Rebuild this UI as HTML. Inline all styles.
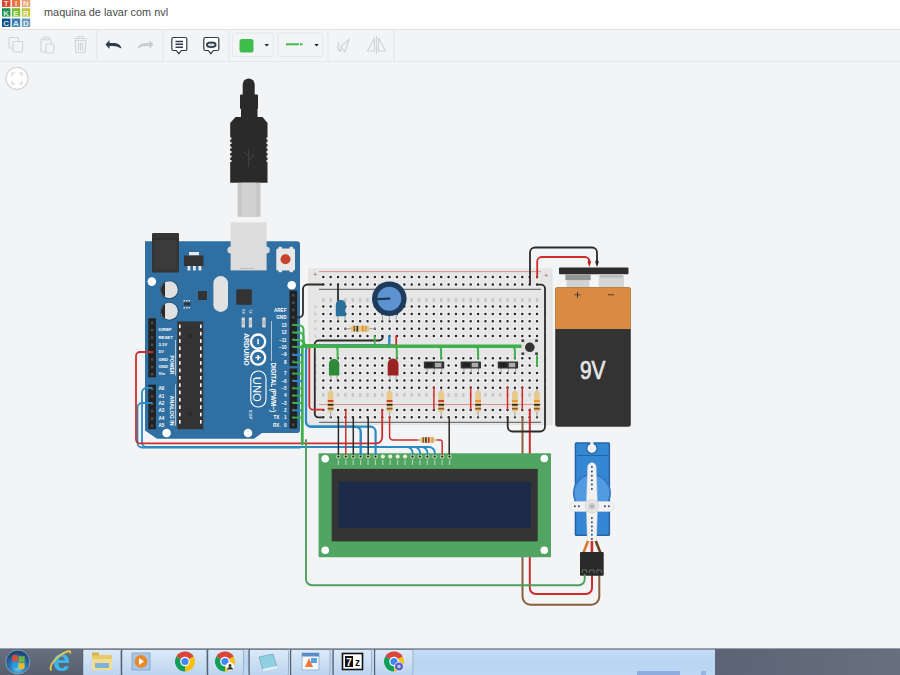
<!DOCTYPE html>
<html><head><meta charset="utf-8"><style>
html,body{margin:0;padding:0;background:#f3f4f6;overflow:hidden}
svg{display:block}
</style></head><body>
<svg width="900" height="675" viewBox="0 0 900 675">
<rect width="900" height="675" fill="#f3f4f6"/>
<rect x="0" y="0" width="900" height="29" fill="#ffffff"/>
<rect x="0" y="29" width="900" height="1" fill="#e2e3e5"/>
<rect x="0" y="30" width="900" height="31" fill="#f3f4f6"/>
<rect x="0" y="61" width="900" height="1" fill="#e6e7e9"/>
<rect x="2" y="-1.5" width="8.4" height="8.4" fill="#d9452f"/>
<text x="6.2" y="5.8" font-family='"Liberation Sans", sans-serif' font-weight="bold" font-size="8" fill="#ffffff" fill-opacity="0.85" text-anchor="middle">T</text>
<rect x="11.8" y="-1.5" width="8.4" height="8.4" fill="#e9743f"/>
<text x="16.0" y="5.8" font-family='"Liberation Sans", sans-serif' font-weight="bold" font-size="8" fill="#ffffff" fill-opacity="0.85" text-anchor="middle">I</text>
<rect x="21.8" y="-1.5" width="8.4" height="8.4" fill="#e3a070"/>
<text x="26.0" y="5.8" font-family='"Liberation Sans", sans-serif' font-weight="bold" font-size="8" fill="#ffffff" fill-opacity="0.85" text-anchor="middle">N</text>
<rect x="2" y="8.2" width="8.4" height="8.4" fill="#1f9350"/>
<text x="6.2" y="15.5" font-family='"Liberation Sans", sans-serif' font-weight="bold" font-size="8" fill="#ffffff" fill-opacity="0.85" text-anchor="middle">K</text>
<rect x="11.8" y="8.2" width="8.4" height="8.4" fill="#7cbd2f"/>
<text x="16.0" y="15.5" font-family='"Liberation Sans", sans-serif' font-weight="bold" font-size="8" fill="#ffffff" fill-opacity="0.85" text-anchor="middle">E</text>
<rect x="21.8" y="8.2" width="8.4" height="8.4" fill="#c5c43f"/>
<text x="26.0" y="15.5" font-family='"Liberation Sans", sans-serif' font-weight="bold" font-size="8" fill="#ffffff" fill-opacity="0.85" text-anchor="middle">R</text>
<rect x="2" y="18.5" width="8.4" height="8.4" fill="#0c4f8a"/>
<text x="6.2" y="25.8" font-family='"Liberation Sans", sans-serif' font-weight="bold" font-size="8" fill="#ffffff" fill-opacity="0.85" text-anchor="middle">C</text>
<rect x="11.8" y="18.5" width="8.4" height="8.4" fill="#3a7fb2"/>
<text x="16.0" y="25.8" font-family='"Liberation Sans", sans-serif' font-weight="bold" font-size="8" fill="#ffffff" fill-opacity="0.85" text-anchor="middle">A</text>
<rect x="21.8" y="18.5" width="8.4" height="8.4" fill="#6a9dc4"/>
<text x="26.0" y="25.8" font-family='"Liberation Sans", sans-serif' font-weight="bold" font-size="8" fill="#ffffff" fill-opacity="0.85" text-anchor="middle">D</text>
<text x="44" y="16" font-family='"Liberation Sans", sans-serif' font-size="10.9" fill="#4a4a4a">maquina de lavar com nvl</text>
<rect x="96.5" y="30" width="1" height="31" fill="#e3e4e6"/>
<rect x="162.5" y="30" width="1" height="31" fill="#e3e4e6"/>
<rect x="228.5" y="30" width="1" height="31" fill="#e3e4e6"/>
<rect x="327.5" y="30" width="1" height="31" fill="#e3e4e6"/>
<rect x="393.5" y="30" width="1" height="31" fill="#e3e4e6"/>
<g fill="none" stroke="#d2d4d7" stroke-width="1.15"><rect x="9" y="37.5" width="9.5" height="10.5" rx="1"/><rect x="13" y="41.5" width="9.5" height="10.5" rx="1" fill="#f3f4f6"/></g>
<g fill="none" stroke="#d2d4d7" stroke-width="1.15"><rect x="41" y="39" width="10" height="13" rx="1"/><rect x="43.5" y="37" width="5" height="3" rx="0.8"/><rect x="46" y="44" width="8" height="9" rx="1" fill="#f3f4f6"/></g>
<g fill="none" stroke="#d2d4d7" stroke-width="1.15"><path d="M73.5 38.5h14M78 38.5v-2h5v2"/><path d="M75 40.5h11l-1 12h-9z"/><path d="M78.5 42.5v8M80.5 42.5v8M82.5 42.5v8"/></g>
<path d="M121.5 48.5c-1-4-4-5.5-8.5-5.5h-3.5v-3l-4 4.5 4 4.5v-3h3c3 0 5.5 0.8 9 2.5z" fill="#2d3b4a"/>
<path d="M137.5 48.5c1-4 4-5.5 8.5-5.5h3.5v-3l4 4.5-4 4.5v-3h-3c-3 0-5.5 0.8-9 2.5z" fill="#c9cdd2"/>
<g fill="#ffffff" stroke="#2d3b4a" stroke-width="1.2"><path d="M173.3 37.5h12a1.5 1.5 0 0 1 1.5 1.5v10a1.5 1.5 0 0 1-1.5 1.5h-4l-2.5 3.2-2.5-3.2h-3a1.5 1.5 0 0 1-1.5-1.5v-10a1.5 1.5 0 0 1 1.5-1.5z"/></g><path d="M175.5 41.5h7.5M175.5 44.3h7.5M175.5 47.3h7.5" stroke="#2d3b4a" stroke-width="1.4"/>
<g fill="#ffffff" stroke="#2d3b4a" stroke-width="1.2"><path d="M205.3 37.5h12a1.5 1.5 0 0 1 1.5 1.5v10a1.5 1.5 0 0 1-1.5 1.5h-4l-2.5 3.2-2.5-3.2h-3a1.5 1.5 0 0 1-1.5-1.5v-10a1.5 1.5 0 0 1 1.5-1.5z"/></g>
<ellipse cx="211.3" cy="44.8" rx="4.3" ry="2.3" fill="#e8eaee" stroke="#2d3b4a" stroke-width="1.9"/><circle cx="211.3" cy="44.8" r="0.8" fill="#9aa"/>
<rect x="232.5" y="33" width="41" height="23.5" rx="2" fill="#f3f4f6" stroke="#e6e7e9"/>
<rect x="239.5" y="39" width="14" height="13.5" rx="2.5" fill="#3dbd4a"/>
<path d="M264.5 44h4.5l-2.25 2.5z" fill="#222"/>
<rect x="278" y="33" width="45" height="23.5" rx="2" fill="#f3f4f6" stroke="#e6e7e9"/>
<rect x="286" y="43.3" width="13" height="2" fill="#3dbd4a"/><rect x="300" y="43.3" width="2.5" height="2" fill="#3dbd4a"/>
<path d="M314.3 44h4.5l-2.25 2.5z" fill="#222"/>
<g fill="none" stroke="#d2d4d7" stroke-width="1.3" stroke-linejoin="round"><path d="M349.3 39.5L340.5 46.5l4.3 5.2z"/><path d="M339 42.5a6 6 0 0 0 1.5 8.5"/><path d="M337.5 49.5l3 1.8 0.5-3"/></g>
<g fill="none" stroke="#d2d4d7" stroke-width="1.2"><path d="M376.5 36v18"/><path d="M374.5 38l-7 13h7z"/><path d="M378.5 38l7 13h-7z"/></g>
<circle cx="17" cy="78.4" r="11" fill="#ffffff" stroke="#d4d5d7" stroke-width="1.2"/>
<g fill="none" stroke="#cfd0d2" stroke-width="1.2"><path d="M12 76v-3h3M22 76v-3h-3M12 81v3h3M22 81v3h-3"/></g>
<rect x="242.7" y="78.5" width="12" height="22" rx="6" fill="#2a2a2a"/>
<rect x="240" y="94.5" width="18" height="14.5" rx="1" fill="#2a2a2a"/>
<rect x="241" y="107" width="16.5" height="11" fill="#2a2a2a"/>
<path d="M235.5 117h27l5 6v59.8h-37.3v-59.8z" fill="#2a2a2a"/>
<rect x="229.7" y="137.5" width="1.8" height="2" fill="#f3f4f6"/>
<rect x="266.5" y="137.5" width="1.8" height="2" fill="#f3f4f6"/>
<rect x="229.7" y="142.0" width="1.8" height="2" fill="#f3f4f6"/>
<rect x="266.5" y="142.0" width="1.8" height="2" fill="#f3f4f6"/>
<rect x="229.7" y="146.5" width="1.8" height="2" fill="#f3f4f6"/>
<rect x="266.5" y="146.5" width="1.8" height="2" fill="#f3f4f6"/>
<rect x="229.7" y="151.0" width="1.8" height="2" fill="#f3f4f6"/>
<rect x="266.5" y="151.0" width="1.8" height="2" fill="#f3f4f6"/>
<rect x="229.7" y="155.5" width="1.8" height="2" fill="#f3f4f6"/>
<rect x="266.5" y="155.5" width="1.8" height="2" fill="#f3f4f6"/>
<rect x="229.7" y="160.0" width="1.8" height="2" fill="#f3f4f6"/>
<rect x="266.5" y="160.0" width="1.8" height="2" fill="#f3f4f6"/>
<g stroke="#444" stroke-width="1" fill="none"><path d="M248.6 149v18M248.6 156l-4 -3v-2M248.6 160l4 -3v-3"/></g>
<rect x="237.6" y="182.8" width="23" height="34" fill="#c9c9c9"/>
<rect x="242" y="182.8" width="14" height="34" fill="#d2d2d2"/>
<rect x="152" y="233" width="27" height="39.5" rx="1.5" fill="#353535"/>
<rect x="155" y="238" width="21" height="30" fill="#3d3d3d"/>
<circle cx="231" cy="249.5" r="4" fill="#dcdcdc"/><circle cx="266" cy="249.5" r="4" fill="#dcdcdc"/>
<path d="M145 241.2H297a3 3 0 0 1 3 3V430a3 3 0 0 1-3 3H262l-8 5.8H157l-12-8.3z" fill="#2f6fa2"/>
<rect x="152" y="233" width="27" height="39.5" rx="1.5" fill="#353535"/>
<rect x="154.5" y="240" width="22" height="29" fill="#3b3b3b"/>
<rect x="152" y="238.5" width="27" height="0.8" fill="#2a2a2a"/>
<circle cx="231" cy="250" r="3.6" fill="#dadada"/><circle cx="266.2" cy="250" r="3.6" fill="#dadada"/>
<rect x="230.6" y="222.4" width="36" height="48" fill="#dcdcdc"/>
<rect x="240" y="268" width="14" height="1" fill="#bbbbbb"/>
<rect x="189" y="252" width="10" height="3.5" fill="#e8e8e8"/>
<rect x="184" y="255.5" width="19.5" height="10.5" fill="#333"/>
<rect x="187.5" y="266" width="2.8" height="4.5" fill="#e8e8e8"/>
<rect x="193" y="266" width="2.8" height="4.5" fill="#e8e8e8"/>
<rect x="198.5" y="266" width="2.8" height="4.5" fill="#e8e8e8"/>
<rect x="278.5" y="246.8" width="3.5" height="2.5" fill="#e0e0e0"/>
<rect x="289.5" y="246.8" width="3.5" height="2.5" fill="#e0e0e0"/>
<rect x="278.5" y="269.7" width="3.5" height="2.5" fill="#e0e0e0"/>
<rect x="289.5" y="269.7" width="3.5" height="2.5" fill="#e0e0e0"/>
<rect x="276.3" y="248.5" width="18.7" height="22" rx="1.5" fill="#e8e8e8"/>
<circle cx="285.5" cy="259.3" r="5" fill="#c9402c"/>
<circle cx="151.8" cy="281.6" r="4.3" fill="#ffffff"/>
<circle cx="291.7" cy="285.2" r="4.3" fill="#ffffff"/>
<circle cx="166.6" cy="433" r="4.3" fill="#ffffff"/>
<circle cx="248" cy="433" r="4.3" fill="#ffffff"/>
<circle cx="169.3" cy="289.8" r="9.3" fill="#1e4a70"/>
<circle cx="169.3" cy="289.8" r="8.5" fill="#e0e0e0"/>
<path d="M165 282.55A8.5 8.5 0 0 0 165 297.05z" fill="#2a2a2a"/>
<circle cx="169.3" cy="311.3" r="9.3" fill="#1e4a70"/>
<circle cx="169.3" cy="311.3" r="8.5" fill="#e0e0e0"/>
<path d="M165 304.05A8.5 8.5 0 0 0 165 318.55z" fill="#2a2a2a"/>
<rect x="198" y="291" width="9" height="9" fill="#333"/>
<rect x="184" y="302.5" width="6.5" height="3" fill="#333"/>
<rect x="183.5" y="300" width="1.5" height="1.5" fill="#ddd"/><rect x="183.5" y="307" width="1.5" height="1.5" fill="#ddd"/>
<rect x="186" y="300" width="1.5" height="1.5" fill="#ddd"/><rect x="186" y="307" width="1.5" height="1.5" fill="#ddd"/>
<rect x="188.5" y="300" width="1.5" height="1.5" fill="#ddd"/><rect x="188.5" y="307" width="1.5" height="1.5" fill="#ddd"/>
<rect x="213.4" y="276" width="14.6" height="36" rx="7.3" fill="#e2e2e2"/>
<rect x="236.3" y="289.3" width="15.5" height="15.5" fill="#333"/>
<rect x="241.6" y="317.5" width="3.3" height="10" fill="#dadada"/><rect x="242.2" y="320" width="2.1" height="5" fill="#bbb"/>
<rect x="248.8" y="317.5" width="3.3" height="10" fill="#dadada"/><rect x="249.4" y="320" width="2.1" height="5" fill="#bbb"/>
<rect x="262.3" y="317.5" width="3.3" height="10" fill="#dadada"/><rect x="262.90000000000003" y="320" width="2.1" height="5" fill="#bbb"/>
<text transform="translate(242 309) rotate(90)" font-family='"Liberation Sans", sans-serif' font-size="3.5" fill="#fff">RX</text>
<text transform="translate(249.3 309) rotate(90)" font-family='"Liberation Sans", sans-serif' font-size="3.5" fill="#fff">TX</text>
<rect x="177.3" y="321.4" width="26" height="107.8" fill="#333"/>
<rect x="179" y="324.5" width="1.6" height="3.6" fill="#fff"/><rect x="200" y="324.5" width="1.6" height="3.6" fill="#fff"/>
<rect x="179" y="331.85" width="1.6" height="3.6" fill="#fff"/><rect x="200" y="331.85" width="1.6" height="3.6" fill="#fff"/>
<rect x="179" y="339.2" width="1.6" height="3.6" fill="#fff"/><rect x="200" y="339.2" width="1.6" height="3.6" fill="#fff"/>
<rect x="179" y="346.55" width="1.6" height="3.6" fill="#fff"/><rect x="200" y="346.55" width="1.6" height="3.6" fill="#fff"/>
<rect x="179" y="353.9" width="1.6" height="3.6" fill="#fff"/><rect x="200" y="353.9" width="1.6" height="3.6" fill="#fff"/>
<rect x="179" y="361.25" width="1.6" height="3.6" fill="#fff"/><rect x="200" y="361.25" width="1.6" height="3.6" fill="#fff"/>
<rect x="179" y="368.6" width="1.6" height="3.6" fill="#fff"/><rect x="200" y="368.6" width="1.6" height="3.6" fill="#fff"/>
<rect x="179" y="375.95" width="1.6" height="3.6" fill="#fff"/><rect x="200" y="375.95" width="1.6" height="3.6" fill="#fff"/>
<rect x="179" y="383.3" width="1.6" height="3.6" fill="#fff"/><rect x="200" y="383.3" width="1.6" height="3.6" fill="#fff"/>
<rect x="179" y="390.65" width="1.6" height="3.6" fill="#fff"/><rect x="200" y="390.65" width="1.6" height="3.6" fill="#fff"/>
<rect x="179" y="398.0" width="1.6" height="3.6" fill="#fff"/><rect x="200" y="398.0" width="1.6" height="3.6" fill="#fff"/>
<rect x="179" y="405.35" width="1.6" height="3.6" fill="#fff"/><rect x="200" y="405.35" width="1.6" height="3.6" fill="#fff"/>
<rect x="179" y="412.7" width="1.6" height="3.6" fill="#fff"/><rect x="200" y="412.7" width="1.6" height="3.6" fill="#fff"/>
<rect x="179" y="420.05" width="1.6" height="3.6" fill="#fff"/><rect x="200" y="420.05" width="1.6" height="3.6" fill="#fff"/>
<circle cx="190.3" cy="336" r="2.2" fill="#2a2a2a"/><circle cx="190.3" cy="414" r="2.2" fill="#2a2a2a"/>
<rect x="148.3" y="318.3" width="7.6" height="59" fill="#222"/>
<rect x="150.8" y="321.5" width="2.6" height="2.6" fill="#4a4a4a"/>
<rect x="150.8" y="328.85" width="2.6" height="2.6" fill="#4a4a4a"/>
<rect x="150.8" y="336.2" width="2.6" height="2.6" fill="#4a4a4a"/>
<rect x="150.8" y="343.55" width="2.6" height="2.6" fill="#4a4a4a"/>
<rect x="150.8" y="350.9" width="2.6" height="2.6" fill="#4a4a4a"/>
<rect x="150.8" y="358.25" width="2.6" height="2.6" fill="#4a4a4a"/>
<rect x="150.8" y="365.6" width="2.6" height="2.6" fill="#4a4a4a"/>
<rect x="150.8" y="372.95" width="2.6" height="2.6" fill="#4a4a4a"/>
<rect x="148.3" y="384.7" width="7.6" height="44.5" fill="#222"/>
<rect x="150.8" y="387.8" width="2.6" height="2.6" fill="#4a4a4a"/>
<rect x="150.8" y="395.15000000000003" width="2.6" height="2.6" fill="#4a4a4a"/>
<rect x="150.8" y="402.5" width="2.6" height="2.6" fill="#4a4a4a"/>
<rect x="150.8" y="409.85" width="2.6" height="2.6" fill="#4a4a4a"/>
<rect x="150.8" y="417.2" width="2.6" height="2.6" fill="#4a4a4a"/>
<rect x="150.8" y="424.55" width="2.6" height="2.6" fill="#4a4a4a"/>
<text x="158.5" y="331.3" font-family='"Liberation Sans", sans-serif' font-size="4.3" font-weight="bold" fill="#fff">IOREF</text>
<text x="158.5" y="338.65000000000003" font-family='"Liberation Sans", sans-serif' font-size="4.3" font-weight="bold" fill="#fff">RESET</text>
<text x="158.5" y="346.0" font-family='"Liberation Sans", sans-serif' font-size="4.3" font-weight="bold" fill="#fff">3.3V</text>
<text x="158.5" y="353.35" font-family='"Liberation Sans", sans-serif' font-size="4.3" font-weight="bold" fill="#fff">5V</text>
<text x="158.5" y="360.7" font-family='"Liberation Sans", sans-serif' font-size="4.3" font-weight="bold" fill="#fff">GND</text>
<text x="158.5" y="368.05" font-family='"Liberation Sans", sans-serif' font-size="4.3" font-weight="bold" fill="#fff">GND</text>
<text x="158.5" y="375.4" font-family='"Liberation Sans", sans-serif' font-size="4.3" font-weight="bold" fill="#fff">Vin</text>
<text x="158.5" y="390.3" font-family='"Liberation Sans", sans-serif' font-size="4.6" font-weight="bold" fill="#fff">A0</text>
<text x="158.5" y="397.65000000000003" font-family='"Liberation Sans", sans-serif' font-size="4.6" font-weight="bold" fill="#fff">A1</text>
<text x="158.5" y="405.0" font-family='"Liberation Sans", sans-serif' font-size="4.6" font-weight="bold" fill="#fff">A2</text>
<text x="158.5" y="412.35" font-family='"Liberation Sans", sans-serif' font-size="4.6" font-weight="bold" fill="#fff">A3</text>
<text x="158.5" y="419.7" font-family='"Liberation Sans", sans-serif' font-size="4.6" font-weight="bold" fill="#fff">A4</text>
<text x="158.5" y="427.05" font-family='"Liberation Sans", sans-serif' font-size="4.6" font-weight="bold" fill="#fff">A5</text>
<text transform="translate(170.2 355.5) rotate(90)" font-family='"Liberation Sans", sans-serif' font-size="5" font-weight="bold" fill="#fff">POWER</text>
<rect x="175.1" y="340" width="0.6" height="35.5" fill="#fff"/>
<text transform="translate(170.2 395.5) rotate(90)" font-family='"Liberation Sans", sans-serif' font-size="5.4" font-weight="bold" fill="#fff">ANALOG IN</text>
<rect x="175.1" y="384.3" width="0.6" height="41.5" fill="#fff"/>
<rect x="289.5" y="290.5" width="7.6" height="75.5" fill="#222"/>
<rect x="289.5" y="368.5" width="7.6" height="60" fill="#222"/>
<rect x="292" y="294.0" width="2.6" height="2.6" fill="#4a4a4a"/>
<rect x="292" y="301.35" width="2.6" height="2.6" fill="#4a4a4a"/>
<rect x="292" y="308.7" width="2.6" height="2.6" fill="#4a4a4a"/>
<rect x="292" y="316.05" width="2.6" height="2.6" fill="#4a4a4a"/>
<rect x="292" y="323.4" width="2.6" height="2.6" fill="#4a4a4a"/>
<rect x="292" y="330.75" width="2.6" height="2.6" fill="#4a4a4a"/>
<rect x="292" y="338.1" width="2.6" height="2.6" fill="#4a4a4a"/>
<rect x="292" y="345.45" width="2.6" height="2.6" fill="#4a4a4a"/>
<rect x="292" y="352.8" width="2.6" height="2.6" fill="#4a4a4a"/>
<rect x="292" y="360.15" width="2.6" height="2.6" fill="#4a4a4a"/>
<rect x="292" y="372.0" width="2.6" height="2.6" fill="#4a4a4a"/>
<rect x="292" y="379.35" width="2.6" height="2.6" fill="#4a4a4a"/>
<rect x="292" y="386.7" width="2.6" height="2.6" fill="#4a4a4a"/>
<rect x="292" y="394.05" width="2.6" height="2.6" fill="#4a4a4a"/>
<rect x="292" y="401.4" width="2.6" height="2.6" fill="#4a4a4a"/>
<rect x="292" y="408.75" width="2.6" height="2.6" fill="#4a4a4a"/>
<rect x="292" y="416.1" width="2.6" height="2.6" fill="#4a4a4a"/>
<rect x="292" y="423.45" width="2.6" height="2.6" fill="#4a4a4a"/>
<text x="286.5" y="311.5" font-family='"Liberation Sans", sans-serif' font-size="4.6" font-weight="bold" fill="#fff" text-anchor="end">AREF</text>
<text x="286.5" y="318.8" font-family='"Liberation Sans", sans-serif' font-size="4.6" font-weight="bold" fill="#fff" text-anchor="end">GND</text>
<text x="286.5" y="326.5" font-family='"Liberation Sans", sans-serif' font-size="4.6" font-weight="bold" fill="#fff" text-anchor="end">13</text>
<text x="286.5" y="334.2" font-family='"Liberation Sans", sans-serif' font-size="4.6" font-weight="bold" fill="#fff" text-anchor="end">12</text>
<text x="286.5" y="341.5" font-family='"Liberation Sans", sans-serif' font-size="4.6" font-weight="bold" fill="#fff" text-anchor="end">~11</text>
<text x="286.5" y="348.8" font-family='"Liberation Sans", sans-serif' font-size="4.6" font-weight="bold" fill="#fff" text-anchor="end">~10</text>
<text x="286.5" y="356" font-family='"Liberation Sans", sans-serif' font-size="4.6" font-weight="bold" fill="#fff" text-anchor="end">~9</text>
<text x="286.5" y="363.5" font-family='"Liberation Sans", sans-serif' font-size="4.6" font-weight="bold" fill="#fff" text-anchor="end">8</text>
<text x="286.5" y="374.8" font-family='"Liberation Sans", sans-serif' font-size="4.6" font-weight="bold" fill="#fff" text-anchor="end">7</text>
<text x="286.5" y="382.5" font-family='"Liberation Sans", sans-serif' font-size="4.6" font-weight="bold" fill="#fff" text-anchor="end">~6</text>
<text x="286.5" y="389.8" font-family='"Liberation Sans", sans-serif' font-size="4.6" font-weight="bold" fill="#fff" text-anchor="end">~5</text>
<text x="286.5" y="397.3" font-family='"Liberation Sans", sans-serif' font-size="4.6" font-weight="bold" fill="#fff" text-anchor="end">4</text>
<text x="286.5" y="404.8" font-family='"Liberation Sans", sans-serif' font-size="4.6" font-weight="bold" fill="#fff" text-anchor="end">~3</text>
<text x="286.5" y="412" font-family='"Liberation Sans", sans-serif' font-size="4.6" font-weight="bold" fill="#fff" text-anchor="end">2</text>
<text x="286.5" y="419.3" font-family='"Liberation Sans", sans-serif' font-size="4.6" font-weight="bold" fill="#fff" text-anchor="end">TX→1</text>
<text x="286.5" y="427" font-family='"Liberation Sans", sans-serif' font-size="4.6" font-weight="bold" fill="#fff" text-anchor="end">RX←0</text>
<text transform="translate(271.3 362.4) rotate(90)" font-family='"Liberation Sans", sans-serif' font-size="6.3" font-weight="bold" fill="#fff">DIGITAL (PWM~)</text>
<rect x="271" y="321" width="0.6" height="40" fill="#fff"/>
<text transform="translate(243.5 333) rotate(90)" font-family='"Liberation Sans", sans-serif' font-size="7" font-weight="bold" fill="#fff">ARDUINO</text>
<g fill="none" stroke="#fff" stroke-width="2.3"><circle cx="258.1" cy="341.6" r="7.1"/><circle cx="258.1" cy="357.6" r="7.1"/></g>
<g stroke="#fff" stroke-width="1.5"><path d="M258.1 339v5.2"/><path d="M258.1 355v5.2M255.5 357.6h5.2"/></g>
<rect x="250.8" y="371" width="15.2" height="36" rx="7.6" fill="none" stroke="#fff" stroke-width="1.1"/>
<text transform="translate(253.2 376.8) rotate(90)" font-family='"Liberation Sans", sans-serif' font-size="11.2" fill="#fff">UNO</text>
<text transform="translate(249 410) rotate(90)" font-family='"Liberation Sans", sans-serif' font-size="4" font-weight="bold" fill="#e8e8e8">ICSP</text>
<rect x="308.5" y="268.5" width="244" height="156.5" rx="1.5" fill="#dedede"/>
<rect x="309.5" y="269" width="242" height="155.5" fill="#e6e6e6"/>
<rect x="319" y="271.2" width="222" height="0.9" fill="#d48a8a"/>
<rect x="319" y="288.8" width="222" height="1" fill="#555"/>
<rect x="319" y="404" width="222" height="0.9" fill="#d48a8a"/>
<rect x="319" y="421.8" width="222" height="1" fill="#555"/>
<text x="315.1" y="277" font-family='"Liberation Sans", sans-serif' font-size="7.5" fill="#b86060" text-anchor="middle">+</text>
<text x="546.2" y="277.5" font-family='"Liberation Sans", sans-serif' font-size="7.5" fill="#b86060" text-anchor="middle">+</text>
<path fill="#f0f0f0" d="M321.00 274.80h4.6v4.6h-4.6zM328.37 274.80h4.6v4.6h-4.6zM335.74 274.80h4.6v4.6h-4.6zM343.11 274.80h4.6v4.6h-4.6zM350.48 274.80h4.6v4.6h-4.6zM357.85 274.80h4.6v4.6h-4.6zM365.22 274.80h4.6v4.6h-4.6zM372.59 274.80h4.6v4.6h-4.6zM379.96 274.80h4.6v4.6h-4.6zM387.33 274.80h4.6v4.6h-4.6zM394.70 274.80h4.6v4.6h-4.6zM402.07 274.80h4.6v4.6h-4.6zM409.44 274.80h4.6v4.6h-4.6zM416.81 274.80h4.6v4.6h-4.6zM424.18 274.80h4.6v4.6h-4.6zM431.55 274.80h4.6v4.6h-4.6zM438.92 274.80h4.6v4.6h-4.6zM446.29 274.80h4.6v4.6h-4.6zM453.66 274.80h4.6v4.6h-4.6zM461.03 274.80h4.6v4.6h-4.6zM468.40 274.80h4.6v4.6h-4.6zM475.77 274.80h4.6v4.6h-4.6zM483.14 274.80h4.6v4.6h-4.6zM490.51 274.80h4.6v4.6h-4.6zM497.88 274.80h4.6v4.6h-4.6zM505.25 274.80h4.6v4.6h-4.6zM512.62 274.80h4.6v4.6h-4.6zM519.99 274.80h4.6v4.6h-4.6zM527.36 274.80h4.6v4.6h-4.6zM534.73 274.80h4.6v4.6h-4.6zM321.00 282.20h4.6v4.6h-4.6zM328.37 282.20h4.6v4.6h-4.6zM335.74 282.20h4.6v4.6h-4.6zM343.11 282.20h4.6v4.6h-4.6zM350.48 282.20h4.6v4.6h-4.6zM357.85 282.20h4.6v4.6h-4.6zM365.22 282.20h4.6v4.6h-4.6zM372.59 282.20h4.6v4.6h-4.6zM379.96 282.20h4.6v4.6h-4.6zM387.33 282.20h4.6v4.6h-4.6zM394.70 282.20h4.6v4.6h-4.6zM402.07 282.20h4.6v4.6h-4.6zM409.44 282.20h4.6v4.6h-4.6zM416.81 282.20h4.6v4.6h-4.6zM424.18 282.20h4.6v4.6h-4.6zM431.55 282.20h4.6v4.6h-4.6zM438.92 282.20h4.6v4.6h-4.6zM446.29 282.20h4.6v4.6h-4.6zM453.66 282.20h4.6v4.6h-4.6zM461.03 282.20h4.6v4.6h-4.6zM468.40 282.20h4.6v4.6h-4.6zM475.77 282.20h4.6v4.6h-4.6zM483.14 282.20h4.6v4.6h-4.6zM490.51 282.20h4.6v4.6h-4.6zM497.88 282.20h4.6v4.6h-4.6zM505.25 282.20h4.6v4.6h-4.6zM512.62 282.20h4.6v4.6h-4.6zM519.99 282.20h4.6v4.6h-4.6zM527.36 282.20h4.6v4.6h-4.6zM534.73 282.20h4.6v4.6h-4.6zM321.00 304.30h4.6v4.6h-4.6zM328.37 304.30h4.6v4.6h-4.6zM335.74 304.30h4.6v4.6h-4.6zM343.11 304.30h4.6v4.6h-4.6zM350.48 304.30h4.6v4.6h-4.6zM357.85 304.30h4.6v4.6h-4.6zM365.22 304.30h4.6v4.6h-4.6zM372.59 304.30h4.6v4.6h-4.6zM379.96 304.30h4.6v4.6h-4.6zM387.33 304.30h4.6v4.6h-4.6zM394.70 304.30h4.6v4.6h-4.6zM402.07 304.30h4.6v4.6h-4.6zM409.44 304.30h4.6v4.6h-4.6zM416.81 304.30h4.6v4.6h-4.6zM424.18 304.30h4.6v4.6h-4.6zM431.55 304.30h4.6v4.6h-4.6zM438.92 304.30h4.6v4.6h-4.6zM446.29 304.30h4.6v4.6h-4.6zM453.66 304.30h4.6v4.6h-4.6zM461.03 304.30h4.6v4.6h-4.6zM468.40 304.30h4.6v4.6h-4.6zM475.77 304.30h4.6v4.6h-4.6zM483.14 304.30h4.6v4.6h-4.6zM490.51 304.30h4.6v4.6h-4.6zM497.88 304.30h4.6v4.6h-4.6zM505.25 304.30h4.6v4.6h-4.6zM512.62 304.30h4.6v4.6h-4.6zM519.99 304.30h4.6v4.6h-4.6zM527.36 304.30h4.6v4.6h-4.6zM534.73 304.30h4.6v4.6h-4.6zM321.00 311.70h4.6v4.6h-4.6zM328.37 311.70h4.6v4.6h-4.6zM335.74 311.70h4.6v4.6h-4.6zM343.11 311.70h4.6v4.6h-4.6zM350.48 311.70h4.6v4.6h-4.6zM357.85 311.70h4.6v4.6h-4.6zM365.22 311.70h4.6v4.6h-4.6zM372.59 311.70h4.6v4.6h-4.6zM379.96 311.70h4.6v4.6h-4.6zM387.33 311.70h4.6v4.6h-4.6zM394.70 311.70h4.6v4.6h-4.6zM402.07 311.70h4.6v4.6h-4.6zM409.44 311.70h4.6v4.6h-4.6zM416.81 311.70h4.6v4.6h-4.6zM424.18 311.70h4.6v4.6h-4.6zM431.55 311.70h4.6v4.6h-4.6zM438.92 311.70h4.6v4.6h-4.6zM446.29 311.70h4.6v4.6h-4.6zM453.66 311.70h4.6v4.6h-4.6zM461.03 311.70h4.6v4.6h-4.6zM468.40 311.70h4.6v4.6h-4.6zM475.77 311.70h4.6v4.6h-4.6zM483.14 311.70h4.6v4.6h-4.6zM490.51 311.70h4.6v4.6h-4.6zM497.88 311.70h4.6v4.6h-4.6zM505.25 311.70h4.6v4.6h-4.6zM512.62 311.70h4.6v4.6h-4.6zM519.99 311.70h4.6v4.6h-4.6zM527.36 311.70h4.6v4.6h-4.6zM534.73 311.70h4.6v4.6h-4.6zM321.00 319.00h4.6v4.6h-4.6zM328.37 319.00h4.6v4.6h-4.6zM335.74 319.00h4.6v4.6h-4.6zM343.11 319.00h4.6v4.6h-4.6zM350.48 319.00h4.6v4.6h-4.6zM357.85 319.00h4.6v4.6h-4.6zM365.22 319.00h4.6v4.6h-4.6zM372.59 319.00h4.6v4.6h-4.6zM379.96 319.00h4.6v4.6h-4.6zM387.33 319.00h4.6v4.6h-4.6zM394.70 319.00h4.6v4.6h-4.6zM402.07 319.00h4.6v4.6h-4.6zM409.44 319.00h4.6v4.6h-4.6zM416.81 319.00h4.6v4.6h-4.6zM424.18 319.00h4.6v4.6h-4.6zM431.55 319.00h4.6v4.6h-4.6zM438.92 319.00h4.6v4.6h-4.6zM446.29 319.00h4.6v4.6h-4.6zM453.66 319.00h4.6v4.6h-4.6zM461.03 319.00h4.6v4.6h-4.6zM468.40 319.00h4.6v4.6h-4.6zM475.77 319.00h4.6v4.6h-4.6zM483.14 319.00h4.6v4.6h-4.6zM490.51 319.00h4.6v4.6h-4.6zM497.88 319.00h4.6v4.6h-4.6zM505.25 319.00h4.6v4.6h-4.6zM512.62 319.00h4.6v4.6h-4.6zM519.99 319.00h4.6v4.6h-4.6zM527.36 319.00h4.6v4.6h-4.6zM534.73 319.00h4.6v4.6h-4.6zM321.00 326.40h4.6v4.6h-4.6zM328.37 326.40h4.6v4.6h-4.6zM335.74 326.40h4.6v4.6h-4.6zM343.11 326.40h4.6v4.6h-4.6zM350.48 326.40h4.6v4.6h-4.6zM357.85 326.40h4.6v4.6h-4.6zM365.22 326.40h4.6v4.6h-4.6zM372.59 326.40h4.6v4.6h-4.6zM379.96 326.40h4.6v4.6h-4.6zM387.33 326.40h4.6v4.6h-4.6zM394.70 326.40h4.6v4.6h-4.6zM402.07 326.40h4.6v4.6h-4.6zM409.44 326.40h4.6v4.6h-4.6zM416.81 326.40h4.6v4.6h-4.6zM424.18 326.40h4.6v4.6h-4.6zM431.55 326.40h4.6v4.6h-4.6zM438.92 326.40h4.6v4.6h-4.6zM446.29 326.40h4.6v4.6h-4.6zM453.66 326.40h4.6v4.6h-4.6zM461.03 326.40h4.6v4.6h-4.6zM468.40 326.40h4.6v4.6h-4.6zM475.77 326.40h4.6v4.6h-4.6zM483.14 326.40h4.6v4.6h-4.6zM490.51 326.40h4.6v4.6h-4.6zM497.88 326.40h4.6v4.6h-4.6zM505.25 326.40h4.6v4.6h-4.6zM512.62 326.40h4.6v4.6h-4.6zM519.99 326.40h4.6v4.6h-4.6zM527.36 326.40h4.6v4.6h-4.6zM534.73 326.40h4.6v4.6h-4.6zM321.00 333.70h4.6v4.6h-4.6zM328.37 333.70h4.6v4.6h-4.6zM335.74 333.70h4.6v4.6h-4.6zM343.11 333.70h4.6v4.6h-4.6zM350.48 333.70h4.6v4.6h-4.6zM357.85 333.70h4.6v4.6h-4.6zM365.22 333.70h4.6v4.6h-4.6zM372.59 333.70h4.6v4.6h-4.6zM379.96 333.70h4.6v4.6h-4.6zM387.33 333.70h4.6v4.6h-4.6zM394.70 333.70h4.6v4.6h-4.6zM402.07 333.70h4.6v4.6h-4.6zM409.44 333.70h4.6v4.6h-4.6zM416.81 333.70h4.6v4.6h-4.6zM424.18 333.70h4.6v4.6h-4.6zM431.55 333.70h4.6v4.6h-4.6zM438.92 333.70h4.6v4.6h-4.6zM446.29 333.70h4.6v4.6h-4.6zM453.66 333.70h4.6v4.6h-4.6zM461.03 333.70h4.6v4.6h-4.6zM468.40 333.70h4.6v4.6h-4.6zM475.77 333.70h4.6v4.6h-4.6zM483.14 333.70h4.6v4.6h-4.6zM490.51 333.70h4.6v4.6h-4.6zM497.88 333.70h4.6v4.6h-4.6zM505.25 333.70h4.6v4.6h-4.6zM512.62 333.70h4.6v4.6h-4.6zM519.99 333.70h4.6v4.6h-4.6zM527.36 333.70h4.6v4.6h-4.6zM534.73 333.70h4.6v4.6h-4.6zM321.00 356.00h4.6v4.6h-4.6zM328.37 356.00h4.6v4.6h-4.6zM335.74 356.00h4.6v4.6h-4.6zM343.11 356.00h4.6v4.6h-4.6zM350.48 356.00h4.6v4.6h-4.6zM357.85 356.00h4.6v4.6h-4.6zM365.22 356.00h4.6v4.6h-4.6zM372.59 356.00h4.6v4.6h-4.6zM379.96 356.00h4.6v4.6h-4.6zM387.33 356.00h4.6v4.6h-4.6zM394.70 356.00h4.6v4.6h-4.6zM402.07 356.00h4.6v4.6h-4.6zM409.44 356.00h4.6v4.6h-4.6zM416.81 356.00h4.6v4.6h-4.6zM424.18 356.00h4.6v4.6h-4.6zM431.55 356.00h4.6v4.6h-4.6zM438.92 356.00h4.6v4.6h-4.6zM446.29 356.00h4.6v4.6h-4.6zM453.66 356.00h4.6v4.6h-4.6zM461.03 356.00h4.6v4.6h-4.6zM468.40 356.00h4.6v4.6h-4.6zM475.77 356.00h4.6v4.6h-4.6zM483.14 356.00h4.6v4.6h-4.6zM490.51 356.00h4.6v4.6h-4.6zM497.88 356.00h4.6v4.6h-4.6zM505.25 356.00h4.6v4.6h-4.6zM512.62 356.00h4.6v4.6h-4.6zM519.99 356.00h4.6v4.6h-4.6zM527.36 356.00h4.6v4.6h-4.6zM534.73 356.00h4.6v4.6h-4.6zM321.00 363.30h4.6v4.6h-4.6zM328.37 363.30h4.6v4.6h-4.6zM335.74 363.30h4.6v4.6h-4.6zM343.11 363.30h4.6v4.6h-4.6zM350.48 363.30h4.6v4.6h-4.6zM357.85 363.30h4.6v4.6h-4.6zM365.22 363.30h4.6v4.6h-4.6zM372.59 363.30h4.6v4.6h-4.6zM379.96 363.30h4.6v4.6h-4.6zM387.33 363.30h4.6v4.6h-4.6zM394.70 363.30h4.6v4.6h-4.6zM402.07 363.30h4.6v4.6h-4.6zM409.44 363.30h4.6v4.6h-4.6zM416.81 363.30h4.6v4.6h-4.6zM424.18 363.30h4.6v4.6h-4.6zM431.55 363.30h4.6v4.6h-4.6zM438.92 363.30h4.6v4.6h-4.6zM446.29 363.30h4.6v4.6h-4.6zM453.66 363.30h4.6v4.6h-4.6zM461.03 363.30h4.6v4.6h-4.6zM468.40 363.30h4.6v4.6h-4.6zM475.77 363.30h4.6v4.6h-4.6zM483.14 363.30h4.6v4.6h-4.6zM490.51 363.30h4.6v4.6h-4.6zM497.88 363.30h4.6v4.6h-4.6zM505.25 363.30h4.6v4.6h-4.6zM512.62 363.30h4.6v4.6h-4.6zM519.99 363.30h4.6v4.6h-4.6zM527.36 363.30h4.6v4.6h-4.6zM534.73 363.30h4.6v4.6h-4.6zM321.00 370.70h4.6v4.6h-4.6zM328.37 370.70h4.6v4.6h-4.6zM335.74 370.70h4.6v4.6h-4.6zM343.11 370.70h4.6v4.6h-4.6zM350.48 370.70h4.6v4.6h-4.6zM357.85 370.70h4.6v4.6h-4.6zM365.22 370.70h4.6v4.6h-4.6zM372.59 370.70h4.6v4.6h-4.6zM379.96 370.70h4.6v4.6h-4.6zM387.33 370.70h4.6v4.6h-4.6zM394.70 370.70h4.6v4.6h-4.6zM402.07 370.70h4.6v4.6h-4.6zM409.44 370.70h4.6v4.6h-4.6zM416.81 370.70h4.6v4.6h-4.6zM424.18 370.70h4.6v4.6h-4.6zM431.55 370.70h4.6v4.6h-4.6zM438.92 370.70h4.6v4.6h-4.6zM446.29 370.70h4.6v4.6h-4.6zM453.66 370.70h4.6v4.6h-4.6zM461.03 370.70h4.6v4.6h-4.6zM468.40 370.70h4.6v4.6h-4.6zM475.77 370.70h4.6v4.6h-4.6zM483.14 370.70h4.6v4.6h-4.6zM490.51 370.70h4.6v4.6h-4.6zM497.88 370.70h4.6v4.6h-4.6zM505.25 370.70h4.6v4.6h-4.6zM512.62 370.70h4.6v4.6h-4.6zM519.99 370.70h4.6v4.6h-4.6zM527.36 370.70h4.6v4.6h-4.6zM534.73 370.70h4.6v4.6h-4.6zM321.00 378.10h4.6v4.6h-4.6zM328.37 378.10h4.6v4.6h-4.6zM335.74 378.10h4.6v4.6h-4.6zM343.11 378.10h4.6v4.6h-4.6zM350.48 378.10h4.6v4.6h-4.6zM357.85 378.10h4.6v4.6h-4.6zM365.22 378.10h4.6v4.6h-4.6zM372.59 378.10h4.6v4.6h-4.6zM379.96 378.10h4.6v4.6h-4.6zM387.33 378.10h4.6v4.6h-4.6zM394.70 378.10h4.6v4.6h-4.6zM402.07 378.10h4.6v4.6h-4.6zM409.44 378.10h4.6v4.6h-4.6zM416.81 378.10h4.6v4.6h-4.6zM424.18 378.10h4.6v4.6h-4.6zM431.55 378.10h4.6v4.6h-4.6zM438.92 378.10h4.6v4.6h-4.6zM446.29 378.10h4.6v4.6h-4.6zM453.66 378.10h4.6v4.6h-4.6zM461.03 378.10h4.6v4.6h-4.6zM468.40 378.10h4.6v4.6h-4.6zM475.77 378.10h4.6v4.6h-4.6zM483.14 378.10h4.6v4.6h-4.6zM490.51 378.10h4.6v4.6h-4.6zM497.88 378.10h4.6v4.6h-4.6zM505.25 378.10h4.6v4.6h-4.6zM512.62 378.10h4.6v4.6h-4.6zM519.99 378.10h4.6v4.6h-4.6zM527.36 378.10h4.6v4.6h-4.6zM534.73 378.10h4.6v4.6h-4.6zM321.00 385.50h4.6v4.6h-4.6zM328.37 385.50h4.6v4.6h-4.6zM335.74 385.50h4.6v4.6h-4.6zM343.11 385.50h4.6v4.6h-4.6zM350.48 385.50h4.6v4.6h-4.6zM357.85 385.50h4.6v4.6h-4.6zM365.22 385.50h4.6v4.6h-4.6zM372.59 385.50h4.6v4.6h-4.6zM379.96 385.50h4.6v4.6h-4.6zM387.33 385.50h4.6v4.6h-4.6zM394.70 385.50h4.6v4.6h-4.6zM402.07 385.50h4.6v4.6h-4.6zM409.44 385.50h4.6v4.6h-4.6zM416.81 385.50h4.6v4.6h-4.6zM424.18 385.50h4.6v4.6h-4.6zM431.55 385.50h4.6v4.6h-4.6zM438.92 385.50h4.6v4.6h-4.6zM446.29 385.50h4.6v4.6h-4.6zM453.66 385.50h4.6v4.6h-4.6zM461.03 385.50h4.6v4.6h-4.6zM468.40 385.50h4.6v4.6h-4.6zM475.77 385.50h4.6v4.6h-4.6zM483.14 385.50h4.6v4.6h-4.6zM490.51 385.50h4.6v4.6h-4.6zM497.88 385.50h4.6v4.6h-4.6zM505.25 385.50h4.6v4.6h-4.6zM512.62 385.50h4.6v4.6h-4.6zM519.99 385.50h4.6v4.6h-4.6zM527.36 385.50h4.6v4.6h-4.6zM534.73 385.50h4.6v4.6h-4.6zM321.00 407.70h4.6v4.6h-4.6zM328.37 407.70h4.6v4.6h-4.6zM335.74 407.70h4.6v4.6h-4.6zM343.11 407.70h4.6v4.6h-4.6zM350.48 407.70h4.6v4.6h-4.6zM357.85 407.70h4.6v4.6h-4.6zM365.22 407.70h4.6v4.6h-4.6zM372.59 407.70h4.6v4.6h-4.6zM379.96 407.70h4.6v4.6h-4.6zM387.33 407.70h4.6v4.6h-4.6zM394.70 407.70h4.6v4.6h-4.6zM402.07 407.70h4.6v4.6h-4.6zM409.44 407.70h4.6v4.6h-4.6zM416.81 407.70h4.6v4.6h-4.6zM424.18 407.70h4.6v4.6h-4.6zM431.55 407.70h4.6v4.6h-4.6zM438.92 407.70h4.6v4.6h-4.6zM446.29 407.70h4.6v4.6h-4.6zM453.66 407.70h4.6v4.6h-4.6zM461.03 407.70h4.6v4.6h-4.6zM468.40 407.70h4.6v4.6h-4.6zM475.77 407.70h4.6v4.6h-4.6zM483.14 407.70h4.6v4.6h-4.6zM490.51 407.70h4.6v4.6h-4.6zM497.88 407.70h4.6v4.6h-4.6zM505.25 407.70h4.6v4.6h-4.6zM512.62 407.70h4.6v4.6h-4.6zM519.99 407.70h4.6v4.6h-4.6zM527.36 407.70h4.6v4.6h-4.6zM534.73 407.70h4.6v4.6h-4.6zM321.00 415.00h4.6v4.6h-4.6zM328.37 415.00h4.6v4.6h-4.6zM335.74 415.00h4.6v4.6h-4.6zM343.11 415.00h4.6v4.6h-4.6zM350.48 415.00h4.6v4.6h-4.6zM357.85 415.00h4.6v4.6h-4.6zM365.22 415.00h4.6v4.6h-4.6zM372.59 415.00h4.6v4.6h-4.6zM379.96 415.00h4.6v4.6h-4.6zM387.33 415.00h4.6v4.6h-4.6zM394.70 415.00h4.6v4.6h-4.6zM402.07 415.00h4.6v4.6h-4.6zM409.44 415.00h4.6v4.6h-4.6zM416.81 415.00h4.6v4.6h-4.6zM424.18 415.00h4.6v4.6h-4.6zM431.55 415.00h4.6v4.6h-4.6zM438.92 415.00h4.6v4.6h-4.6zM446.29 415.00h4.6v4.6h-4.6zM453.66 415.00h4.6v4.6h-4.6zM461.03 415.00h4.6v4.6h-4.6zM468.40 415.00h4.6v4.6h-4.6zM475.77 415.00h4.6v4.6h-4.6zM483.14 415.00h4.6v4.6h-4.6zM490.51 415.00h4.6v4.6h-4.6zM497.88 415.00h4.6v4.6h-4.6zM505.25 415.00h4.6v4.6h-4.6zM512.62 415.00h4.6v4.6h-4.6zM519.99 415.00h4.6v4.6h-4.6zM527.36 415.00h4.6v4.6h-4.6zM534.73 415.00h4.6v4.6h-4.6z"/>
<path fill="#262626" d="M322.05 277.10a1.25 1.25 0 1 0 2.5 0a1.25 1.25 0 1 0 -2.5 0zM329.42 277.10a1.25 1.25 0 1 0 2.5 0a1.25 1.25 0 1 0 -2.5 0zM336.79 277.10a1.25 1.25 0 1 0 2.5 0a1.25 1.25 0 1 0 -2.5 0zM344.16 277.10a1.25 1.25 0 1 0 2.5 0a1.25 1.25 0 1 0 -2.5 0zM351.53 277.10a1.25 1.25 0 1 0 2.5 0a1.25 1.25 0 1 0 -2.5 0zM358.90 277.10a1.25 1.25 0 1 0 2.5 0a1.25 1.25 0 1 0 -2.5 0zM366.27 277.10a1.25 1.25 0 1 0 2.5 0a1.25 1.25 0 1 0 -2.5 0zM373.64 277.10a1.25 1.25 0 1 0 2.5 0a1.25 1.25 0 1 0 -2.5 0zM381.01 277.10a1.25 1.25 0 1 0 2.5 0a1.25 1.25 0 1 0 -2.5 0zM388.38 277.10a1.25 1.25 0 1 0 2.5 0a1.25 1.25 0 1 0 -2.5 0zM395.75 277.10a1.25 1.25 0 1 0 2.5 0a1.25 1.25 0 1 0 -2.5 0zM403.12 277.10a1.25 1.25 0 1 0 2.5 0a1.25 1.25 0 1 0 -2.5 0zM410.49 277.10a1.25 1.25 0 1 0 2.5 0a1.25 1.25 0 1 0 -2.5 0zM417.86 277.10a1.25 1.25 0 1 0 2.5 0a1.25 1.25 0 1 0 -2.5 0zM425.23 277.10a1.25 1.25 0 1 0 2.5 0a1.25 1.25 0 1 0 -2.5 0zM432.60 277.10a1.25 1.25 0 1 0 2.5 0a1.25 1.25 0 1 0 -2.5 0zM439.97 277.10a1.25 1.25 0 1 0 2.5 0a1.25 1.25 0 1 0 -2.5 0zM447.34 277.10a1.25 1.25 0 1 0 2.5 0a1.25 1.25 0 1 0 -2.5 0zM454.71 277.10a1.25 1.25 0 1 0 2.5 0a1.25 1.25 0 1 0 -2.5 0zM462.08 277.10a1.25 1.25 0 1 0 2.5 0a1.25 1.25 0 1 0 -2.5 0zM469.45 277.10a1.25 1.25 0 1 0 2.5 0a1.25 1.25 0 1 0 -2.5 0zM476.82 277.10a1.25 1.25 0 1 0 2.5 0a1.25 1.25 0 1 0 -2.5 0zM484.19 277.10a1.25 1.25 0 1 0 2.5 0a1.25 1.25 0 1 0 -2.5 0zM491.56 277.10a1.25 1.25 0 1 0 2.5 0a1.25 1.25 0 1 0 -2.5 0zM498.93 277.10a1.25 1.25 0 1 0 2.5 0a1.25 1.25 0 1 0 -2.5 0zM506.30 277.10a1.25 1.25 0 1 0 2.5 0a1.25 1.25 0 1 0 -2.5 0zM513.67 277.10a1.25 1.25 0 1 0 2.5 0a1.25 1.25 0 1 0 -2.5 0zM521.04 277.10a1.25 1.25 0 1 0 2.5 0a1.25 1.25 0 1 0 -2.5 0zM528.41 277.10a1.25 1.25 0 1 0 2.5 0a1.25 1.25 0 1 0 -2.5 0zM535.78 277.10a1.25 1.25 0 1 0 2.5 0a1.25 1.25 0 1 0 -2.5 0zM322.05 284.50a1.25 1.25 0 1 0 2.5 0a1.25 1.25 0 1 0 -2.5 0zM329.42 284.50a1.25 1.25 0 1 0 2.5 0a1.25 1.25 0 1 0 -2.5 0zM336.79 284.50a1.25 1.25 0 1 0 2.5 0a1.25 1.25 0 1 0 -2.5 0zM344.16 284.50a1.25 1.25 0 1 0 2.5 0a1.25 1.25 0 1 0 -2.5 0zM351.53 284.50a1.25 1.25 0 1 0 2.5 0a1.25 1.25 0 1 0 -2.5 0zM358.90 284.50a1.25 1.25 0 1 0 2.5 0a1.25 1.25 0 1 0 -2.5 0zM366.27 284.50a1.25 1.25 0 1 0 2.5 0a1.25 1.25 0 1 0 -2.5 0zM373.64 284.50a1.25 1.25 0 1 0 2.5 0a1.25 1.25 0 1 0 -2.5 0zM381.01 284.50a1.25 1.25 0 1 0 2.5 0a1.25 1.25 0 1 0 -2.5 0zM388.38 284.50a1.25 1.25 0 1 0 2.5 0a1.25 1.25 0 1 0 -2.5 0zM395.75 284.50a1.25 1.25 0 1 0 2.5 0a1.25 1.25 0 1 0 -2.5 0zM403.12 284.50a1.25 1.25 0 1 0 2.5 0a1.25 1.25 0 1 0 -2.5 0zM410.49 284.50a1.25 1.25 0 1 0 2.5 0a1.25 1.25 0 1 0 -2.5 0zM417.86 284.50a1.25 1.25 0 1 0 2.5 0a1.25 1.25 0 1 0 -2.5 0zM425.23 284.50a1.25 1.25 0 1 0 2.5 0a1.25 1.25 0 1 0 -2.5 0zM432.60 284.50a1.25 1.25 0 1 0 2.5 0a1.25 1.25 0 1 0 -2.5 0zM439.97 284.50a1.25 1.25 0 1 0 2.5 0a1.25 1.25 0 1 0 -2.5 0zM447.34 284.50a1.25 1.25 0 1 0 2.5 0a1.25 1.25 0 1 0 -2.5 0zM454.71 284.50a1.25 1.25 0 1 0 2.5 0a1.25 1.25 0 1 0 -2.5 0zM462.08 284.50a1.25 1.25 0 1 0 2.5 0a1.25 1.25 0 1 0 -2.5 0zM469.45 284.50a1.25 1.25 0 1 0 2.5 0a1.25 1.25 0 1 0 -2.5 0zM476.82 284.50a1.25 1.25 0 1 0 2.5 0a1.25 1.25 0 1 0 -2.5 0zM484.19 284.50a1.25 1.25 0 1 0 2.5 0a1.25 1.25 0 1 0 -2.5 0zM491.56 284.50a1.25 1.25 0 1 0 2.5 0a1.25 1.25 0 1 0 -2.5 0zM498.93 284.50a1.25 1.25 0 1 0 2.5 0a1.25 1.25 0 1 0 -2.5 0zM506.30 284.50a1.25 1.25 0 1 0 2.5 0a1.25 1.25 0 1 0 -2.5 0zM513.67 284.50a1.25 1.25 0 1 0 2.5 0a1.25 1.25 0 1 0 -2.5 0zM521.04 284.50a1.25 1.25 0 1 0 2.5 0a1.25 1.25 0 1 0 -2.5 0zM528.41 284.50a1.25 1.25 0 1 0 2.5 0a1.25 1.25 0 1 0 -2.5 0zM535.78 284.50a1.25 1.25 0 1 0 2.5 0a1.25 1.25 0 1 0 -2.5 0zM322.05 306.60a1.25 1.25 0 1 0 2.5 0a1.25 1.25 0 1 0 -2.5 0zM329.42 306.60a1.25 1.25 0 1 0 2.5 0a1.25 1.25 0 1 0 -2.5 0zM336.79 306.60a1.25 1.25 0 1 0 2.5 0a1.25 1.25 0 1 0 -2.5 0zM344.16 306.60a1.25 1.25 0 1 0 2.5 0a1.25 1.25 0 1 0 -2.5 0zM351.53 306.60a1.25 1.25 0 1 0 2.5 0a1.25 1.25 0 1 0 -2.5 0zM358.90 306.60a1.25 1.25 0 1 0 2.5 0a1.25 1.25 0 1 0 -2.5 0zM366.27 306.60a1.25 1.25 0 1 0 2.5 0a1.25 1.25 0 1 0 -2.5 0zM373.64 306.60a1.25 1.25 0 1 0 2.5 0a1.25 1.25 0 1 0 -2.5 0zM381.01 306.60a1.25 1.25 0 1 0 2.5 0a1.25 1.25 0 1 0 -2.5 0zM388.38 306.60a1.25 1.25 0 1 0 2.5 0a1.25 1.25 0 1 0 -2.5 0zM395.75 306.60a1.25 1.25 0 1 0 2.5 0a1.25 1.25 0 1 0 -2.5 0zM403.12 306.60a1.25 1.25 0 1 0 2.5 0a1.25 1.25 0 1 0 -2.5 0zM410.49 306.60a1.25 1.25 0 1 0 2.5 0a1.25 1.25 0 1 0 -2.5 0zM417.86 306.60a1.25 1.25 0 1 0 2.5 0a1.25 1.25 0 1 0 -2.5 0zM425.23 306.60a1.25 1.25 0 1 0 2.5 0a1.25 1.25 0 1 0 -2.5 0zM432.60 306.60a1.25 1.25 0 1 0 2.5 0a1.25 1.25 0 1 0 -2.5 0zM439.97 306.60a1.25 1.25 0 1 0 2.5 0a1.25 1.25 0 1 0 -2.5 0zM447.34 306.60a1.25 1.25 0 1 0 2.5 0a1.25 1.25 0 1 0 -2.5 0zM454.71 306.60a1.25 1.25 0 1 0 2.5 0a1.25 1.25 0 1 0 -2.5 0zM462.08 306.60a1.25 1.25 0 1 0 2.5 0a1.25 1.25 0 1 0 -2.5 0zM469.45 306.60a1.25 1.25 0 1 0 2.5 0a1.25 1.25 0 1 0 -2.5 0zM476.82 306.60a1.25 1.25 0 1 0 2.5 0a1.25 1.25 0 1 0 -2.5 0zM484.19 306.60a1.25 1.25 0 1 0 2.5 0a1.25 1.25 0 1 0 -2.5 0zM491.56 306.60a1.25 1.25 0 1 0 2.5 0a1.25 1.25 0 1 0 -2.5 0zM498.93 306.60a1.25 1.25 0 1 0 2.5 0a1.25 1.25 0 1 0 -2.5 0zM506.30 306.60a1.25 1.25 0 1 0 2.5 0a1.25 1.25 0 1 0 -2.5 0zM513.67 306.60a1.25 1.25 0 1 0 2.5 0a1.25 1.25 0 1 0 -2.5 0zM521.04 306.60a1.25 1.25 0 1 0 2.5 0a1.25 1.25 0 1 0 -2.5 0zM528.41 306.60a1.25 1.25 0 1 0 2.5 0a1.25 1.25 0 1 0 -2.5 0zM535.78 306.60a1.25 1.25 0 1 0 2.5 0a1.25 1.25 0 1 0 -2.5 0zM322.05 314.00a1.25 1.25 0 1 0 2.5 0a1.25 1.25 0 1 0 -2.5 0zM329.42 314.00a1.25 1.25 0 1 0 2.5 0a1.25 1.25 0 1 0 -2.5 0zM336.79 314.00a1.25 1.25 0 1 0 2.5 0a1.25 1.25 0 1 0 -2.5 0zM344.16 314.00a1.25 1.25 0 1 0 2.5 0a1.25 1.25 0 1 0 -2.5 0zM351.53 314.00a1.25 1.25 0 1 0 2.5 0a1.25 1.25 0 1 0 -2.5 0zM358.90 314.00a1.25 1.25 0 1 0 2.5 0a1.25 1.25 0 1 0 -2.5 0zM366.27 314.00a1.25 1.25 0 1 0 2.5 0a1.25 1.25 0 1 0 -2.5 0zM373.64 314.00a1.25 1.25 0 1 0 2.5 0a1.25 1.25 0 1 0 -2.5 0zM381.01 314.00a1.25 1.25 0 1 0 2.5 0a1.25 1.25 0 1 0 -2.5 0zM388.38 314.00a1.25 1.25 0 1 0 2.5 0a1.25 1.25 0 1 0 -2.5 0zM395.75 314.00a1.25 1.25 0 1 0 2.5 0a1.25 1.25 0 1 0 -2.5 0zM403.12 314.00a1.25 1.25 0 1 0 2.5 0a1.25 1.25 0 1 0 -2.5 0zM410.49 314.00a1.25 1.25 0 1 0 2.5 0a1.25 1.25 0 1 0 -2.5 0zM417.86 314.00a1.25 1.25 0 1 0 2.5 0a1.25 1.25 0 1 0 -2.5 0zM425.23 314.00a1.25 1.25 0 1 0 2.5 0a1.25 1.25 0 1 0 -2.5 0zM432.60 314.00a1.25 1.25 0 1 0 2.5 0a1.25 1.25 0 1 0 -2.5 0zM439.97 314.00a1.25 1.25 0 1 0 2.5 0a1.25 1.25 0 1 0 -2.5 0zM447.34 314.00a1.25 1.25 0 1 0 2.5 0a1.25 1.25 0 1 0 -2.5 0zM454.71 314.00a1.25 1.25 0 1 0 2.5 0a1.25 1.25 0 1 0 -2.5 0zM462.08 314.00a1.25 1.25 0 1 0 2.5 0a1.25 1.25 0 1 0 -2.5 0zM469.45 314.00a1.25 1.25 0 1 0 2.5 0a1.25 1.25 0 1 0 -2.5 0zM476.82 314.00a1.25 1.25 0 1 0 2.5 0a1.25 1.25 0 1 0 -2.5 0zM484.19 314.00a1.25 1.25 0 1 0 2.5 0a1.25 1.25 0 1 0 -2.5 0zM491.56 314.00a1.25 1.25 0 1 0 2.5 0a1.25 1.25 0 1 0 -2.5 0zM498.93 314.00a1.25 1.25 0 1 0 2.5 0a1.25 1.25 0 1 0 -2.5 0zM506.30 314.00a1.25 1.25 0 1 0 2.5 0a1.25 1.25 0 1 0 -2.5 0zM513.67 314.00a1.25 1.25 0 1 0 2.5 0a1.25 1.25 0 1 0 -2.5 0zM521.04 314.00a1.25 1.25 0 1 0 2.5 0a1.25 1.25 0 1 0 -2.5 0zM528.41 314.00a1.25 1.25 0 1 0 2.5 0a1.25 1.25 0 1 0 -2.5 0zM535.78 314.00a1.25 1.25 0 1 0 2.5 0a1.25 1.25 0 1 0 -2.5 0zM322.05 321.30a1.25 1.25 0 1 0 2.5 0a1.25 1.25 0 1 0 -2.5 0zM329.42 321.30a1.25 1.25 0 1 0 2.5 0a1.25 1.25 0 1 0 -2.5 0zM336.79 321.30a1.25 1.25 0 1 0 2.5 0a1.25 1.25 0 1 0 -2.5 0zM344.16 321.30a1.25 1.25 0 1 0 2.5 0a1.25 1.25 0 1 0 -2.5 0zM351.53 321.30a1.25 1.25 0 1 0 2.5 0a1.25 1.25 0 1 0 -2.5 0zM358.90 321.30a1.25 1.25 0 1 0 2.5 0a1.25 1.25 0 1 0 -2.5 0zM366.27 321.30a1.25 1.25 0 1 0 2.5 0a1.25 1.25 0 1 0 -2.5 0zM373.64 321.30a1.25 1.25 0 1 0 2.5 0a1.25 1.25 0 1 0 -2.5 0zM381.01 321.30a1.25 1.25 0 1 0 2.5 0a1.25 1.25 0 1 0 -2.5 0zM388.38 321.30a1.25 1.25 0 1 0 2.5 0a1.25 1.25 0 1 0 -2.5 0zM395.75 321.30a1.25 1.25 0 1 0 2.5 0a1.25 1.25 0 1 0 -2.5 0zM403.12 321.30a1.25 1.25 0 1 0 2.5 0a1.25 1.25 0 1 0 -2.5 0zM410.49 321.30a1.25 1.25 0 1 0 2.5 0a1.25 1.25 0 1 0 -2.5 0zM417.86 321.30a1.25 1.25 0 1 0 2.5 0a1.25 1.25 0 1 0 -2.5 0zM425.23 321.30a1.25 1.25 0 1 0 2.5 0a1.25 1.25 0 1 0 -2.5 0zM432.60 321.30a1.25 1.25 0 1 0 2.5 0a1.25 1.25 0 1 0 -2.5 0zM439.97 321.30a1.25 1.25 0 1 0 2.5 0a1.25 1.25 0 1 0 -2.5 0zM447.34 321.30a1.25 1.25 0 1 0 2.5 0a1.25 1.25 0 1 0 -2.5 0zM454.71 321.30a1.25 1.25 0 1 0 2.5 0a1.25 1.25 0 1 0 -2.5 0zM462.08 321.30a1.25 1.25 0 1 0 2.5 0a1.25 1.25 0 1 0 -2.5 0zM469.45 321.30a1.25 1.25 0 1 0 2.5 0a1.25 1.25 0 1 0 -2.5 0zM476.82 321.30a1.25 1.25 0 1 0 2.5 0a1.25 1.25 0 1 0 -2.5 0zM484.19 321.30a1.25 1.25 0 1 0 2.5 0a1.25 1.25 0 1 0 -2.5 0zM491.56 321.30a1.25 1.25 0 1 0 2.5 0a1.25 1.25 0 1 0 -2.5 0zM498.93 321.30a1.25 1.25 0 1 0 2.5 0a1.25 1.25 0 1 0 -2.5 0zM506.30 321.30a1.25 1.25 0 1 0 2.5 0a1.25 1.25 0 1 0 -2.5 0zM513.67 321.30a1.25 1.25 0 1 0 2.5 0a1.25 1.25 0 1 0 -2.5 0zM521.04 321.30a1.25 1.25 0 1 0 2.5 0a1.25 1.25 0 1 0 -2.5 0zM528.41 321.30a1.25 1.25 0 1 0 2.5 0a1.25 1.25 0 1 0 -2.5 0zM535.78 321.30a1.25 1.25 0 1 0 2.5 0a1.25 1.25 0 1 0 -2.5 0zM322.05 328.70a1.25 1.25 0 1 0 2.5 0a1.25 1.25 0 1 0 -2.5 0zM329.42 328.70a1.25 1.25 0 1 0 2.5 0a1.25 1.25 0 1 0 -2.5 0zM336.79 328.70a1.25 1.25 0 1 0 2.5 0a1.25 1.25 0 1 0 -2.5 0zM344.16 328.70a1.25 1.25 0 1 0 2.5 0a1.25 1.25 0 1 0 -2.5 0zM351.53 328.70a1.25 1.25 0 1 0 2.5 0a1.25 1.25 0 1 0 -2.5 0zM358.90 328.70a1.25 1.25 0 1 0 2.5 0a1.25 1.25 0 1 0 -2.5 0zM366.27 328.70a1.25 1.25 0 1 0 2.5 0a1.25 1.25 0 1 0 -2.5 0zM373.64 328.70a1.25 1.25 0 1 0 2.5 0a1.25 1.25 0 1 0 -2.5 0zM381.01 328.70a1.25 1.25 0 1 0 2.5 0a1.25 1.25 0 1 0 -2.5 0zM388.38 328.70a1.25 1.25 0 1 0 2.5 0a1.25 1.25 0 1 0 -2.5 0zM395.75 328.70a1.25 1.25 0 1 0 2.5 0a1.25 1.25 0 1 0 -2.5 0zM403.12 328.70a1.25 1.25 0 1 0 2.5 0a1.25 1.25 0 1 0 -2.5 0zM410.49 328.70a1.25 1.25 0 1 0 2.5 0a1.25 1.25 0 1 0 -2.5 0zM417.86 328.70a1.25 1.25 0 1 0 2.5 0a1.25 1.25 0 1 0 -2.5 0zM425.23 328.70a1.25 1.25 0 1 0 2.5 0a1.25 1.25 0 1 0 -2.5 0zM432.60 328.70a1.25 1.25 0 1 0 2.5 0a1.25 1.25 0 1 0 -2.5 0zM439.97 328.70a1.25 1.25 0 1 0 2.5 0a1.25 1.25 0 1 0 -2.5 0zM447.34 328.70a1.25 1.25 0 1 0 2.5 0a1.25 1.25 0 1 0 -2.5 0zM454.71 328.70a1.25 1.25 0 1 0 2.5 0a1.25 1.25 0 1 0 -2.5 0zM462.08 328.70a1.25 1.25 0 1 0 2.5 0a1.25 1.25 0 1 0 -2.5 0zM469.45 328.70a1.25 1.25 0 1 0 2.5 0a1.25 1.25 0 1 0 -2.5 0zM476.82 328.70a1.25 1.25 0 1 0 2.5 0a1.25 1.25 0 1 0 -2.5 0zM484.19 328.70a1.25 1.25 0 1 0 2.5 0a1.25 1.25 0 1 0 -2.5 0zM491.56 328.70a1.25 1.25 0 1 0 2.5 0a1.25 1.25 0 1 0 -2.5 0zM498.93 328.70a1.25 1.25 0 1 0 2.5 0a1.25 1.25 0 1 0 -2.5 0zM506.30 328.70a1.25 1.25 0 1 0 2.5 0a1.25 1.25 0 1 0 -2.5 0zM513.67 328.70a1.25 1.25 0 1 0 2.5 0a1.25 1.25 0 1 0 -2.5 0zM521.04 328.70a1.25 1.25 0 1 0 2.5 0a1.25 1.25 0 1 0 -2.5 0zM528.41 328.70a1.25 1.25 0 1 0 2.5 0a1.25 1.25 0 1 0 -2.5 0zM535.78 328.70a1.25 1.25 0 1 0 2.5 0a1.25 1.25 0 1 0 -2.5 0zM322.05 336.00a1.25 1.25 0 1 0 2.5 0a1.25 1.25 0 1 0 -2.5 0zM329.42 336.00a1.25 1.25 0 1 0 2.5 0a1.25 1.25 0 1 0 -2.5 0zM336.79 336.00a1.25 1.25 0 1 0 2.5 0a1.25 1.25 0 1 0 -2.5 0zM344.16 336.00a1.25 1.25 0 1 0 2.5 0a1.25 1.25 0 1 0 -2.5 0zM351.53 336.00a1.25 1.25 0 1 0 2.5 0a1.25 1.25 0 1 0 -2.5 0zM358.90 336.00a1.25 1.25 0 1 0 2.5 0a1.25 1.25 0 1 0 -2.5 0zM366.27 336.00a1.25 1.25 0 1 0 2.5 0a1.25 1.25 0 1 0 -2.5 0zM373.64 336.00a1.25 1.25 0 1 0 2.5 0a1.25 1.25 0 1 0 -2.5 0zM381.01 336.00a1.25 1.25 0 1 0 2.5 0a1.25 1.25 0 1 0 -2.5 0zM388.38 336.00a1.25 1.25 0 1 0 2.5 0a1.25 1.25 0 1 0 -2.5 0zM395.75 336.00a1.25 1.25 0 1 0 2.5 0a1.25 1.25 0 1 0 -2.5 0zM403.12 336.00a1.25 1.25 0 1 0 2.5 0a1.25 1.25 0 1 0 -2.5 0zM410.49 336.00a1.25 1.25 0 1 0 2.5 0a1.25 1.25 0 1 0 -2.5 0zM417.86 336.00a1.25 1.25 0 1 0 2.5 0a1.25 1.25 0 1 0 -2.5 0zM425.23 336.00a1.25 1.25 0 1 0 2.5 0a1.25 1.25 0 1 0 -2.5 0zM432.60 336.00a1.25 1.25 0 1 0 2.5 0a1.25 1.25 0 1 0 -2.5 0zM439.97 336.00a1.25 1.25 0 1 0 2.5 0a1.25 1.25 0 1 0 -2.5 0zM447.34 336.00a1.25 1.25 0 1 0 2.5 0a1.25 1.25 0 1 0 -2.5 0zM454.71 336.00a1.25 1.25 0 1 0 2.5 0a1.25 1.25 0 1 0 -2.5 0zM462.08 336.00a1.25 1.25 0 1 0 2.5 0a1.25 1.25 0 1 0 -2.5 0zM469.45 336.00a1.25 1.25 0 1 0 2.5 0a1.25 1.25 0 1 0 -2.5 0zM476.82 336.00a1.25 1.25 0 1 0 2.5 0a1.25 1.25 0 1 0 -2.5 0zM484.19 336.00a1.25 1.25 0 1 0 2.5 0a1.25 1.25 0 1 0 -2.5 0zM491.56 336.00a1.25 1.25 0 1 0 2.5 0a1.25 1.25 0 1 0 -2.5 0zM498.93 336.00a1.25 1.25 0 1 0 2.5 0a1.25 1.25 0 1 0 -2.5 0zM506.30 336.00a1.25 1.25 0 1 0 2.5 0a1.25 1.25 0 1 0 -2.5 0zM513.67 336.00a1.25 1.25 0 1 0 2.5 0a1.25 1.25 0 1 0 -2.5 0zM521.04 336.00a1.25 1.25 0 1 0 2.5 0a1.25 1.25 0 1 0 -2.5 0zM528.41 336.00a1.25 1.25 0 1 0 2.5 0a1.25 1.25 0 1 0 -2.5 0zM535.78 336.00a1.25 1.25 0 1 0 2.5 0a1.25 1.25 0 1 0 -2.5 0zM322.05 358.30a1.25 1.25 0 1 0 2.5 0a1.25 1.25 0 1 0 -2.5 0zM329.42 358.30a1.25 1.25 0 1 0 2.5 0a1.25 1.25 0 1 0 -2.5 0zM336.79 358.30a1.25 1.25 0 1 0 2.5 0a1.25 1.25 0 1 0 -2.5 0zM344.16 358.30a1.25 1.25 0 1 0 2.5 0a1.25 1.25 0 1 0 -2.5 0zM351.53 358.30a1.25 1.25 0 1 0 2.5 0a1.25 1.25 0 1 0 -2.5 0zM358.90 358.30a1.25 1.25 0 1 0 2.5 0a1.25 1.25 0 1 0 -2.5 0zM366.27 358.30a1.25 1.25 0 1 0 2.5 0a1.25 1.25 0 1 0 -2.5 0zM373.64 358.30a1.25 1.25 0 1 0 2.5 0a1.25 1.25 0 1 0 -2.5 0zM381.01 358.30a1.25 1.25 0 1 0 2.5 0a1.25 1.25 0 1 0 -2.5 0zM388.38 358.30a1.25 1.25 0 1 0 2.5 0a1.25 1.25 0 1 0 -2.5 0zM395.75 358.30a1.25 1.25 0 1 0 2.5 0a1.25 1.25 0 1 0 -2.5 0zM403.12 358.30a1.25 1.25 0 1 0 2.5 0a1.25 1.25 0 1 0 -2.5 0zM410.49 358.30a1.25 1.25 0 1 0 2.5 0a1.25 1.25 0 1 0 -2.5 0zM417.86 358.30a1.25 1.25 0 1 0 2.5 0a1.25 1.25 0 1 0 -2.5 0zM425.23 358.30a1.25 1.25 0 1 0 2.5 0a1.25 1.25 0 1 0 -2.5 0zM432.60 358.30a1.25 1.25 0 1 0 2.5 0a1.25 1.25 0 1 0 -2.5 0zM439.97 358.30a1.25 1.25 0 1 0 2.5 0a1.25 1.25 0 1 0 -2.5 0zM447.34 358.30a1.25 1.25 0 1 0 2.5 0a1.25 1.25 0 1 0 -2.5 0zM454.71 358.30a1.25 1.25 0 1 0 2.5 0a1.25 1.25 0 1 0 -2.5 0zM462.08 358.30a1.25 1.25 0 1 0 2.5 0a1.25 1.25 0 1 0 -2.5 0zM469.45 358.30a1.25 1.25 0 1 0 2.5 0a1.25 1.25 0 1 0 -2.5 0zM476.82 358.30a1.25 1.25 0 1 0 2.5 0a1.25 1.25 0 1 0 -2.5 0zM484.19 358.30a1.25 1.25 0 1 0 2.5 0a1.25 1.25 0 1 0 -2.5 0zM491.56 358.30a1.25 1.25 0 1 0 2.5 0a1.25 1.25 0 1 0 -2.5 0zM498.93 358.30a1.25 1.25 0 1 0 2.5 0a1.25 1.25 0 1 0 -2.5 0zM506.30 358.30a1.25 1.25 0 1 0 2.5 0a1.25 1.25 0 1 0 -2.5 0zM513.67 358.30a1.25 1.25 0 1 0 2.5 0a1.25 1.25 0 1 0 -2.5 0zM521.04 358.30a1.25 1.25 0 1 0 2.5 0a1.25 1.25 0 1 0 -2.5 0zM528.41 358.30a1.25 1.25 0 1 0 2.5 0a1.25 1.25 0 1 0 -2.5 0zM535.78 358.30a1.25 1.25 0 1 0 2.5 0a1.25 1.25 0 1 0 -2.5 0zM322.05 365.60a1.25 1.25 0 1 0 2.5 0a1.25 1.25 0 1 0 -2.5 0zM329.42 365.60a1.25 1.25 0 1 0 2.5 0a1.25 1.25 0 1 0 -2.5 0zM336.79 365.60a1.25 1.25 0 1 0 2.5 0a1.25 1.25 0 1 0 -2.5 0zM344.16 365.60a1.25 1.25 0 1 0 2.5 0a1.25 1.25 0 1 0 -2.5 0zM351.53 365.60a1.25 1.25 0 1 0 2.5 0a1.25 1.25 0 1 0 -2.5 0zM358.90 365.60a1.25 1.25 0 1 0 2.5 0a1.25 1.25 0 1 0 -2.5 0zM366.27 365.60a1.25 1.25 0 1 0 2.5 0a1.25 1.25 0 1 0 -2.5 0zM373.64 365.60a1.25 1.25 0 1 0 2.5 0a1.25 1.25 0 1 0 -2.5 0zM381.01 365.60a1.25 1.25 0 1 0 2.5 0a1.25 1.25 0 1 0 -2.5 0zM388.38 365.60a1.25 1.25 0 1 0 2.5 0a1.25 1.25 0 1 0 -2.5 0zM395.75 365.60a1.25 1.25 0 1 0 2.5 0a1.25 1.25 0 1 0 -2.5 0zM403.12 365.60a1.25 1.25 0 1 0 2.5 0a1.25 1.25 0 1 0 -2.5 0zM410.49 365.60a1.25 1.25 0 1 0 2.5 0a1.25 1.25 0 1 0 -2.5 0zM417.86 365.60a1.25 1.25 0 1 0 2.5 0a1.25 1.25 0 1 0 -2.5 0zM425.23 365.60a1.25 1.25 0 1 0 2.5 0a1.25 1.25 0 1 0 -2.5 0zM432.60 365.60a1.25 1.25 0 1 0 2.5 0a1.25 1.25 0 1 0 -2.5 0zM439.97 365.60a1.25 1.25 0 1 0 2.5 0a1.25 1.25 0 1 0 -2.5 0zM447.34 365.60a1.25 1.25 0 1 0 2.5 0a1.25 1.25 0 1 0 -2.5 0zM454.71 365.60a1.25 1.25 0 1 0 2.5 0a1.25 1.25 0 1 0 -2.5 0zM462.08 365.60a1.25 1.25 0 1 0 2.5 0a1.25 1.25 0 1 0 -2.5 0zM469.45 365.60a1.25 1.25 0 1 0 2.5 0a1.25 1.25 0 1 0 -2.5 0zM476.82 365.60a1.25 1.25 0 1 0 2.5 0a1.25 1.25 0 1 0 -2.5 0zM484.19 365.60a1.25 1.25 0 1 0 2.5 0a1.25 1.25 0 1 0 -2.5 0zM491.56 365.60a1.25 1.25 0 1 0 2.5 0a1.25 1.25 0 1 0 -2.5 0zM498.93 365.60a1.25 1.25 0 1 0 2.5 0a1.25 1.25 0 1 0 -2.5 0zM506.30 365.60a1.25 1.25 0 1 0 2.5 0a1.25 1.25 0 1 0 -2.5 0zM513.67 365.60a1.25 1.25 0 1 0 2.5 0a1.25 1.25 0 1 0 -2.5 0zM521.04 365.60a1.25 1.25 0 1 0 2.5 0a1.25 1.25 0 1 0 -2.5 0zM528.41 365.60a1.25 1.25 0 1 0 2.5 0a1.25 1.25 0 1 0 -2.5 0zM535.78 365.60a1.25 1.25 0 1 0 2.5 0a1.25 1.25 0 1 0 -2.5 0zM322.05 373.00a1.25 1.25 0 1 0 2.5 0a1.25 1.25 0 1 0 -2.5 0zM329.42 373.00a1.25 1.25 0 1 0 2.5 0a1.25 1.25 0 1 0 -2.5 0zM336.79 373.00a1.25 1.25 0 1 0 2.5 0a1.25 1.25 0 1 0 -2.5 0zM344.16 373.00a1.25 1.25 0 1 0 2.5 0a1.25 1.25 0 1 0 -2.5 0zM351.53 373.00a1.25 1.25 0 1 0 2.5 0a1.25 1.25 0 1 0 -2.5 0zM358.90 373.00a1.25 1.25 0 1 0 2.5 0a1.25 1.25 0 1 0 -2.5 0zM366.27 373.00a1.25 1.25 0 1 0 2.5 0a1.25 1.25 0 1 0 -2.5 0zM373.64 373.00a1.25 1.25 0 1 0 2.5 0a1.25 1.25 0 1 0 -2.5 0zM381.01 373.00a1.25 1.25 0 1 0 2.5 0a1.25 1.25 0 1 0 -2.5 0zM388.38 373.00a1.25 1.25 0 1 0 2.5 0a1.25 1.25 0 1 0 -2.5 0zM395.75 373.00a1.25 1.25 0 1 0 2.5 0a1.25 1.25 0 1 0 -2.5 0zM403.12 373.00a1.25 1.25 0 1 0 2.5 0a1.25 1.25 0 1 0 -2.5 0zM410.49 373.00a1.25 1.25 0 1 0 2.5 0a1.25 1.25 0 1 0 -2.5 0zM417.86 373.00a1.25 1.25 0 1 0 2.5 0a1.25 1.25 0 1 0 -2.5 0zM425.23 373.00a1.25 1.25 0 1 0 2.5 0a1.25 1.25 0 1 0 -2.5 0zM432.60 373.00a1.25 1.25 0 1 0 2.5 0a1.25 1.25 0 1 0 -2.5 0zM439.97 373.00a1.25 1.25 0 1 0 2.5 0a1.25 1.25 0 1 0 -2.5 0zM447.34 373.00a1.25 1.25 0 1 0 2.5 0a1.25 1.25 0 1 0 -2.5 0zM454.71 373.00a1.25 1.25 0 1 0 2.5 0a1.25 1.25 0 1 0 -2.5 0zM462.08 373.00a1.25 1.25 0 1 0 2.5 0a1.25 1.25 0 1 0 -2.5 0zM469.45 373.00a1.25 1.25 0 1 0 2.5 0a1.25 1.25 0 1 0 -2.5 0zM476.82 373.00a1.25 1.25 0 1 0 2.5 0a1.25 1.25 0 1 0 -2.5 0zM484.19 373.00a1.25 1.25 0 1 0 2.5 0a1.25 1.25 0 1 0 -2.5 0zM491.56 373.00a1.25 1.25 0 1 0 2.5 0a1.25 1.25 0 1 0 -2.5 0zM498.93 373.00a1.25 1.25 0 1 0 2.5 0a1.25 1.25 0 1 0 -2.5 0zM506.30 373.00a1.25 1.25 0 1 0 2.5 0a1.25 1.25 0 1 0 -2.5 0zM513.67 373.00a1.25 1.25 0 1 0 2.5 0a1.25 1.25 0 1 0 -2.5 0zM521.04 373.00a1.25 1.25 0 1 0 2.5 0a1.25 1.25 0 1 0 -2.5 0zM528.41 373.00a1.25 1.25 0 1 0 2.5 0a1.25 1.25 0 1 0 -2.5 0zM535.78 373.00a1.25 1.25 0 1 0 2.5 0a1.25 1.25 0 1 0 -2.5 0zM322.05 380.40a1.25 1.25 0 1 0 2.5 0a1.25 1.25 0 1 0 -2.5 0zM329.42 380.40a1.25 1.25 0 1 0 2.5 0a1.25 1.25 0 1 0 -2.5 0zM336.79 380.40a1.25 1.25 0 1 0 2.5 0a1.25 1.25 0 1 0 -2.5 0zM344.16 380.40a1.25 1.25 0 1 0 2.5 0a1.25 1.25 0 1 0 -2.5 0zM351.53 380.40a1.25 1.25 0 1 0 2.5 0a1.25 1.25 0 1 0 -2.5 0zM358.90 380.40a1.25 1.25 0 1 0 2.5 0a1.25 1.25 0 1 0 -2.5 0zM366.27 380.40a1.25 1.25 0 1 0 2.5 0a1.25 1.25 0 1 0 -2.5 0zM373.64 380.40a1.25 1.25 0 1 0 2.5 0a1.25 1.25 0 1 0 -2.5 0zM381.01 380.40a1.25 1.25 0 1 0 2.5 0a1.25 1.25 0 1 0 -2.5 0zM388.38 380.40a1.25 1.25 0 1 0 2.5 0a1.25 1.25 0 1 0 -2.5 0zM395.75 380.40a1.25 1.25 0 1 0 2.5 0a1.25 1.25 0 1 0 -2.5 0zM403.12 380.40a1.25 1.25 0 1 0 2.5 0a1.25 1.25 0 1 0 -2.5 0zM410.49 380.40a1.25 1.25 0 1 0 2.5 0a1.25 1.25 0 1 0 -2.5 0zM417.86 380.40a1.25 1.25 0 1 0 2.5 0a1.25 1.25 0 1 0 -2.5 0zM425.23 380.40a1.25 1.25 0 1 0 2.5 0a1.25 1.25 0 1 0 -2.5 0zM432.60 380.40a1.25 1.25 0 1 0 2.5 0a1.25 1.25 0 1 0 -2.5 0zM439.97 380.40a1.25 1.25 0 1 0 2.5 0a1.25 1.25 0 1 0 -2.5 0zM447.34 380.40a1.25 1.25 0 1 0 2.5 0a1.25 1.25 0 1 0 -2.5 0zM454.71 380.40a1.25 1.25 0 1 0 2.5 0a1.25 1.25 0 1 0 -2.5 0zM462.08 380.40a1.25 1.25 0 1 0 2.5 0a1.25 1.25 0 1 0 -2.5 0zM469.45 380.40a1.25 1.25 0 1 0 2.5 0a1.25 1.25 0 1 0 -2.5 0zM476.82 380.40a1.25 1.25 0 1 0 2.5 0a1.25 1.25 0 1 0 -2.5 0zM484.19 380.40a1.25 1.25 0 1 0 2.5 0a1.25 1.25 0 1 0 -2.5 0zM491.56 380.40a1.25 1.25 0 1 0 2.5 0a1.25 1.25 0 1 0 -2.5 0zM498.93 380.40a1.25 1.25 0 1 0 2.5 0a1.25 1.25 0 1 0 -2.5 0zM506.30 380.40a1.25 1.25 0 1 0 2.5 0a1.25 1.25 0 1 0 -2.5 0zM513.67 380.40a1.25 1.25 0 1 0 2.5 0a1.25 1.25 0 1 0 -2.5 0zM521.04 380.40a1.25 1.25 0 1 0 2.5 0a1.25 1.25 0 1 0 -2.5 0zM528.41 380.40a1.25 1.25 0 1 0 2.5 0a1.25 1.25 0 1 0 -2.5 0zM535.78 380.40a1.25 1.25 0 1 0 2.5 0a1.25 1.25 0 1 0 -2.5 0zM322.05 387.80a1.25 1.25 0 1 0 2.5 0a1.25 1.25 0 1 0 -2.5 0zM329.42 387.80a1.25 1.25 0 1 0 2.5 0a1.25 1.25 0 1 0 -2.5 0zM336.79 387.80a1.25 1.25 0 1 0 2.5 0a1.25 1.25 0 1 0 -2.5 0zM344.16 387.80a1.25 1.25 0 1 0 2.5 0a1.25 1.25 0 1 0 -2.5 0zM351.53 387.80a1.25 1.25 0 1 0 2.5 0a1.25 1.25 0 1 0 -2.5 0zM358.90 387.80a1.25 1.25 0 1 0 2.5 0a1.25 1.25 0 1 0 -2.5 0zM366.27 387.80a1.25 1.25 0 1 0 2.5 0a1.25 1.25 0 1 0 -2.5 0zM373.64 387.80a1.25 1.25 0 1 0 2.5 0a1.25 1.25 0 1 0 -2.5 0zM381.01 387.80a1.25 1.25 0 1 0 2.5 0a1.25 1.25 0 1 0 -2.5 0zM388.38 387.80a1.25 1.25 0 1 0 2.5 0a1.25 1.25 0 1 0 -2.5 0zM395.75 387.80a1.25 1.25 0 1 0 2.5 0a1.25 1.25 0 1 0 -2.5 0zM403.12 387.80a1.25 1.25 0 1 0 2.5 0a1.25 1.25 0 1 0 -2.5 0zM410.49 387.80a1.25 1.25 0 1 0 2.5 0a1.25 1.25 0 1 0 -2.5 0zM417.86 387.80a1.25 1.25 0 1 0 2.5 0a1.25 1.25 0 1 0 -2.5 0zM425.23 387.80a1.25 1.25 0 1 0 2.5 0a1.25 1.25 0 1 0 -2.5 0zM432.60 387.80a1.25 1.25 0 1 0 2.5 0a1.25 1.25 0 1 0 -2.5 0zM439.97 387.80a1.25 1.25 0 1 0 2.5 0a1.25 1.25 0 1 0 -2.5 0zM447.34 387.80a1.25 1.25 0 1 0 2.5 0a1.25 1.25 0 1 0 -2.5 0zM454.71 387.80a1.25 1.25 0 1 0 2.5 0a1.25 1.25 0 1 0 -2.5 0zM462.08 387.80a1.25 1.25 0 1 0 2.5 0a1.25 1.25 0 1 0 -2.5 0zM469.45 387.80a1.25 1.25 0 1 0 2.5 0a1.25 1.25 0 1 0 -2.5 0zM476.82 387.80a1.25 1.25 0 1 0 2.5 0a1.25 1.25 0 1 0 -2.5 0zM484.19 387.80a1.25 1.25 0 1 0 2.5 0a1.25 1.25 0 1 0 -2.5 0zM491.56 387.80a1.25 1.25 0 1 0 2.5 0a1.25 1.25 0 1 0 -2.5 0zM498.93 387.80a1.25 1.25 0 1 0 2.5 0a1.25 1.25 0 1 0 -2.5 0zM506.30 387.80a1.25 1.25 0 1 0 2.5 0a1.25 1.25 0 1 0 -2.5 0zM513.67 387.80a1.25 1.25 0 1 0 2.5 0a1.25 1.25 0 1 0 -2.5 0zM521.04 387.80a1.25 1.25 0 1 0 2.5 0a1.25 1.25 0 1 0 -2.5 0zM528.41 387.80a1.25 1.25 0 1 0 2.5 0a1.25 1.25 0 1 0 -2.5 0zM535.78 387.80a1.25 1.25 0 1 0 2.5 0a1.25 1.25 0 1 0 -2.5 0zM322.05 410.00a1.25 1.25 0 1 0 2.5 0a1.25 1.25 0 1 0 -2.5 0zM329.42 410.00a1.25 1.25 0 1 0 2.5 0a1.25 1.25 0 1 0 -2.5 0zM336.79 410.00a1.25 1.25 0 1 0 2.5 0a1.25 1.25 0 1 0 -2.5 0zM344.16 410.00a1.25 1.25 0 1 0 2.5 0a1.25 1.25 0 1 0 -2.5 0zM351.53 410.00a1.25 1.25 0 1 0 2.5 0a1.25 1.25 0 1 0 -2.5 0zM358.90 410.00a1.25 1.25 0 1 0 2.5 0a1.25 1.25 0 1 0 -2.5 0zM366.27 410.00a1.25 1.25 0 1 0 2.5 0a1.25 1.25 0 1 0 -2.5 0zM373.64 410.00a1.25 1.25 0 1 0 2.5 0a1.25 1.25 0 1 0 -2.5 0zM381.01 410.00a1.25 1.25 0 1 0 2.5 0a1.25 1.25 0 1 0 -2.5 0zM388.38 410.00a1.25 1.25 0 1 0 2.5 0a1.25 1.25 0 1 0 -2.5 0zM395.75 410.00a1.25 1.25 0 1 0 2.5 0a1.25 1.25 0 1 0 -2.5 0zM403.12 410.00a1.25 1.25 0 1 0 2.5 0a1.25 1.25 0 1 0 -2.5 0zM410.49 410.00a1.25 1.25 0 1 0 2.5 0a1.25 1.25 0 1 0 -2.5 0zM417.86 410.00a1.25 1.25 0 1 0 2.5 0a1.25 1.25 0 1 0 -2.5 0zM425.23 410.00a1.25 1.25 0 1 0 2.5 0a1.25 1.25 0 1 0 -2.5 0zM432.60 410.00a1.25 1.25 0 1 0 2.5 0a1.25 1.25 0 1 0 -2.5 0zM439.97 410.00a1.25 1.25 0 1 0 2.5 0a1.25 1.25 0 1 0 -2.5 0zM447.34 410.00a1.25 1.25 0 1 0 2.5 0a1.25 1.25 0 1 0 -2.5 0zM454.71 410.00a1.25 1.25 0 1 0 2.5 0a1.25 1.25 0 1 0 -2.5 0zM462.08 410.00a1.25 1.25 0 1 0 2.5 0a1.25 1.25 0 1 0 -2.5 0zM469.45 410.00a1.25 1.25 0 1 0 2.5 0a1.25 1.25 0 1 0 -2.5 0zM476.82 410.00a1.25 1.25 0 1 0 2.5 0a1.25 1.25 0 1 0 -2.5 0zM484.19 410.00a1.25 1.25 0 1 0 2.5 0a1.25 1.25 0 1 0 -2.5 0zM491.56 410.00a1.25 1.25 0 1 0 2.5 0a1.25 1.25 0 1 0 -2.5 0zM498.93 410.00a1.25 1.25 0 1 0 2.5 0a1.25 1.25 0 1 0 -2.5 0zM506.30 410.00a1.25 1.25 0 1 0 2.5 0a1.25 1.25 0 1 0 -2.5 0zM513.67 410.00a1.25 1.25 0 1 0 2.5 0a1.25 1.25 0 1 0 -2.5 0zM521.04 410.00a1.25 1.25 0 1 0 2.5 0a1.25 1.25 0 1 0 -2.5 0zM528.41 410.00a1.25 1.25 0 1 0 2.5 0a1.25 1.25 0 1 0 -2.5 0zM535.78 410.00a1.25 1.25 0 1 0 2.5 0a1.25 1.25 0 1 0 -2.5 0zM322.05 417.30a1.25 1.25 0 1 0 2.5 0a1.25 1.25 0 1 0 -2.5 0zM329.42 417.30a1.25 1.25 0 1 0 2.5 0a1.25 1.25 0 1 0 -2.5 0zM336.79 417.30a1.25 1.25 0 1 0 2.5 0a1.25 1.25 0 1 0 -2.5 0zM344.16 417.30a1.25 1.25 0 1 0 2.5 0a1.25 1.25 0 1 0 -2.5 0zM351.53 417.30a1.25 1.25 0 1 0 2.5 0a1.25 1.25 0 1 0 -2.5 0zM358.90 417.30a1.25 1.25 0 1 0 2.5 0a1.25 1.25 0 1 0 -2.5 0zM366.27 417.30a1.25 1.25 0 1 0 2.5 0a1.25 1.25 0 1 0 -2.5 0zM373.64 417.30a1.25 1.25 0 1 0 2.5 0a1.25 1.25 0 1 0 -2.5 0zM381.01 417.30a1.25 1.25 0 1 0 2.5 0a1.25 1.25 0 1 0 -2.5 0zM388.38 417.30a1.25 1.25 0 1 0 2.5 0a1.25 1.25 0 1 0 -2.5 0zM395.75 417.30a1.25 1.25 0 1 0 2.5 0a1.25 1.25 0 1 0 -2.5 0zM403.12 417.30a1.25 1.25 0 1 0 2.5 0a1.25 1.25 0 1 0 -2.5 0zM410.49 417.30a1.25 1.25 0 1 0 2.5 0a1.25 1.25 0 1 0 -2.5 0zM417.86 417.30a1.25 1.25 0 1 0 2.5 0a1.25 1.25 0 1 0 -2.5 0zM425.23 417.30a1.25 1.25 0 1 0 2.5 0a1.25 1.25 0 1 0 -2.5 0zM432.60 417.30a1.25 1.25 0 1 0 2.5 0a1.25 1.25 0 1 0 -2.5 0zM439.97 417.30a1.25 1.25 0 1 0 2.5 0a1.25 1.25 0 1 0 -2.5 0zM447.34 417.30a1.25 1.25 0 1 0 2.5 0a1.25 1.25 0 1 0 -2.5 0zM454.71 417.30a1.25 1.25 0 1 0 2.5 0a1.25 1.25 0 1 0 -2.5 0zM462.08 417.30a1.25 1.25 0 1 0 2.5 0a1.25 1.25 0 1 0 -2.5 0zM469.45 417.30a1.25 1.25 0 1 0 2.5 0a1.25 1.25 0 1 0 -2.5 0zM476.82 417.30a1.25 1.25 0 1 0 2.5 0a1.25 1.25 0 1 0 -2.5 0zM484.19 417.30a1.25 1.25 0 1 0 2.5 0a1.25 1.25 0 1 0 -2.5 0zM491.56 417.30a1.25 1.25 0 1 0 2.5 0a1.25 1.25 0 1 0 -2.5 0zM498.93 417.30a1.25 1.25 0 1 0 2.5 0a1.25 1.25 0 1 0 -2.5 0zM506.30 417.30a1.25 1.25 0 1 0 2.5 0a1.25 1.25 0 1 0 -2.5 0zM513.67 417.30a1.25 1.25 0 1 0 2.5 0a1.25 1.25 0 1 0 -2.5 0zM521.04 417.30a1.25 1.25 0 1 0 2.5 0a1.25 1.25 0 1 0 -2.5 0zM528.41 417.30a1.25 1.25 0 1 0 2.5 0a1.25 1.25 0 1 0 -2.5 0zM535.78 417.30a1.25 1.25 0 1 0 2.5 0a1.25 1.25 0 1 0 -2.5 0z"/>
<path fill="#c6c6c6" d="M322.10 297.90h2.4v3.8h-2.4zM329.47 297.90h2.4v3.8h-2.4zM336.84 297.90h2.4v3.8h-2.4zM344.21 297.90h2.4v3.8h-2.4zM351.58 297.90h2.4v3.8h-2.4zM358.95 297.90h2.4v3.8h-2.4zM366.32 297.90h2.4v3.8h-2.4zM373.69 297.90h2.4v3.8h-2.4zM381.06 297.90h2.4v3.8h-2.4zM388.43 297.90h2.4v3.8h-2.4zM395.80 297.90h2.4v3.8h-2.4zM403.17 297.90h2.4v3.8h-2.4zM410.54 297.90h2.4v3.8h-2.4zM417.91 297.90h2.4v3.8h-2.4zM425.28 297.90h2.4v3.8h-2.4zM432.65 297.90h2.4v3.8h-2.4zM440.02 297.90h2.4v3.8h-2.4zM447.39 297.90h2.4v3.8h-2.4zM454.76 297.90h2.4v3.8h-2.4zM462.13 297.90h2.4v3.8h-2.4zM469.50 297.90h2.4v3.8h-2.4zM476.87 297.90h2.4v3.8h-2.4zM484.24 297.90h2.4v3.8h-2.4zM491.61 297.90h2.4v3.8h-2.4zM498.98 297.90h2.4v3.8h-2.4zM506.35 297.90h2.4v3.8h-2.4zM513.72 297.90h2.4v3.8h-2.4zM521.09 297.90h2.4v3.8h-2.4zM528.46 297.90h2.4v3.8h-2.4zM535.83 297.90h2.4v3.8h-2.4zM322.10 392.90h2.4v3.8h-2.4zM329.47 392.90h2.4v3.8h-2.4zM336.84 392.90h2.4v3.8h-2.4zM344.21 392.90h2.4v3.8h-2.4zM351.58 392.90h2.4v3.8h-2.4zM358.95 392.90h2.4v3.8h-2.4zM366.32 392.90h2.4v3.8h-2.4zM373.69 392.90h2.4v3.8h-2.4zM381.06 392.90h2.4v3.8h-2.4zM388.43 392.90h2.4v3.8h-2.4zM395.80 392.90h2.4v3.8h-2.4zM403.17 392.90h2.4v3.8h-2.4zM410.54 392.90h2.4v3.8h-2.4zM417.91 392.90h2.4v3.8h-2.4zM425.28 392.90h2.4v3.8h-2.4zM432.65 392.90h2.4v3.8h-2.4zM440.02 392.90h2.4v3.8h-2.4zM447.39 392.90h2.4v3.8h-2.4zM454.76 392.90h2.4v3.8h-2.4zM462.13 392.90h2.4v3.8h-2.4zM469.50 392.90h2.4v3.8h-2.4zM476.87 392.90h2.4v3.8h-2.4zM484.24 392.90h2.4v3.8h-2.4zM491.61 392.90h2.4v3.8h-2.4zM498.98 392.90h2.4v3.8h-2.4zM506.35 392.90h2.4v3.8h-2.4zM513.72 392.90h2.4v3.8h-2.4zM521.09 392.90h2.4v3.8h-2.4zM528.46 392.90h2.4v3.8h-2.4zM535.83 392.90h2.4v3.8h-2.4z"/>
<rect x="314" y="305.3" width="3" height="2.6" fill="#d2d2d2"/>
<rect x="544" y="305.3" width="3" height="2.6" fill="#d8d8d8"/>
<rect x="314" y="312.7" width="3" height="2.6" fill="#d2d2d2"/>
<rect x="544" y="312.7" width="3" height="2.6" fill="#d8d8d8"/>
<rect x="314" y="320.0" width="3" height="2.6" fill="#d2d2d2"/>
<rect x="544" y="320.0" width="3" height="2.6" fill="#d8d8d8"/>
<rect x="314" y="327.4" width="3" height="2.6" fill="#d2d2d2"/>
<rect x="544" y="327.4" width="3" height="2.6" fill="#d8d8d8"/>
<rect x="314" y="334.7" width="3" height="2.6" fill="#d2d2d2"/>
<rect x="544" y="334.7" width="3" height="2.6" fill="#d8d8d8"/>
<rect x="314" y="356.7" width="3" height="2.6" fill="#d2d2d2"/>
<rect x="544" y="356.7" width="3" height="2.6" fill="#d8d8d8"/>
<rect x="314" y="364.09999999999997" width="3" height="2.6" fill="#d2d2d2"/>
<rect x="544" y="364.09999999999997" width="3" height="2.6" fill="#d8d8d8"/>
<rect x="314" y="371.5" width="3" height="2.6" fill="#d2d2d2"/>
<rect x="544" y="371.5" width="3" height="2.6" fill="#d8d8d8"/>
<rect x="314" y="378.9" width="3" height="2.6" fill="#d2d2d2"/>
<rect x="544" y="378.9" width="3" height="2.6" fill="#d8d8d8"/>
<rect x="314" y="386.3" width="3" height="2.6" fill="#d2d2d2"/>
<rect x="544" y="386.3" width="3" height="2.6" fill="#d8d8d8"/>
<rect x="559" y="267.5" width="69.5" height="6.8" rx="1" fill="#2d2d2d"/>
<rect x="566.7" y="274.3" width="22.6" height="13" fill="#d2d2d2"/>
<rect x="565.3" y="274.3" width="25.4" height="5.8" fill="#959595"/>
<rect x="598.7" y="274.3" width="25.3" height="13" fill="#d6d6d6"/>
<rect x="600" y="274.3" width="22.7" height="3.5" fill="#bdbdbd"/>
<rect x="555.2" y="287.3" width="75.6" height="139.5" rx="2.5" fill="#333333"/>
<path d="M555.2 289.8a2.5 2.5 0 0 1 2.5-2.5h70.6a2.5 2.5 0 0 1 2.5 2.5V329H555.2z" fill="#d98b43"/>
<g stroke="#333" stroke-width="0.9"><path d="M574.5 294.8h6M577.5 291.8v6M608 294.8h6"/></g>
<text x="580" y="379.3" font-family='"Liberation Sans", sans-serif' font-size="25.5" fill="#e6e6e6" stroke="#e6e6e6" stroke-width="0.7" textLength="25.5" lengthAdjust="spacingAndGlyphs">9V</text>
<path d="M529.8 409.4V588a6 6 0 0 0 6 6H586a6 6 0 0 0 6-6V575" fill="none" stroke="#d02d2a" stroke-width="2" stroke-linecap="round" stroke-linejoin="round"/>
<path d="M522.5 417.3V596.7a8 8 0 0 0 8 8H591.3a8 8 0 0 0 8-8V575" fill="none" stroke="#8b5e3c" stroke-width="2" stroke-linecap="round" stroke-linejoin="round"/>
<rect x="318.6" y="453.2" width="232.4" height="104" rx="1" fill="#52a463"/>
<rect x="331.7" y="468.9" width="206" height="72.5" fill="#343434"/>
<rect x="338.5" y="481.6" width="192.5" height="46.5" fill="#1e2b48"/>
<circle cx="325.2" cy="458.8" r="3.8" fill="#ffffff"/>
<circle cx="544.3" cy="458.5" r="3.8" fill="#ffffff"/>
<circle cx="325.2" cy="550.3" r="3.8" fill="#ffffff"/>
<circle cx="544.3" cy="550.3" r="3.8" fill="#ffffff"/>
<circle cx="338.40" cy="456.6" r="1.9" fill="#52a463" stroke="#d6d2aa" stroke-width="1"/>
<circle cx="338.40" cy="456.6" r="0.9" fill="#2a2a2a"/>
<rect x="337.80" y="460" width="1.2" height="5" fill="#a9d3b2"/>
<circle cx="345.81" cy="456.6" r="1.9" fill="#52a463" stroke="#d6d2aa" stroke-width="1"/>
<circle cx="345.81" cy="456.6" r="0.9" fill="#2a2a2a"/>
<rect x="345.21" y="460" width="1.2" height="5" fill="#a9d3b2"/>
<circle cx="353.22" cy="456.6" r="1.9" fill="#52a463" stroke="#d6d2aa" stroke-width="1"/>
<circle cx="353.22" cy="456.6" r="0.9" fill="#2a2a2a"/>
<rect x="352.62" y="460" width="1.2" height="5" fill="#a9d3b2"/>
<circle cx="360.63" cy="456.6" r="1.9" fill="#52a463" stroke="#d6d2aa" stroke-width="1"/>
<circle cx="360.63" cy="456.6" r="0.9" fill="#2a2a2a"/>
<rect x="360.03" y="460" width="1.2" height="5" fill="#a9d3b2"/>
<circle cx="368.04" cy="456.6" r="1.9" fill="#52a463" stroke="#d6d2aa" stroke-width="1"/>
<circle cx="368.04" cy="456.6" r="0.9" fill="#2a2a2a"/>
<rect x="367.44" y="460" width="1.2" height="5" fill="#a9d3b2"/>
<circle cx="375.45" cy="456.6" r="1.9" fill="#52a463" stroke="#d6d2aa" stroke-width="1"/>
<circle cx="375.45" cy="456.6" r="0.9" fill="#2a2a2a"/>
<rect x="374.85" y="460" width="1.2" height="5" fill="#a9d3b2"/>
<circle cx="382.86" cy="456.6" r="2.1" fill="#e6eed2"/>
<rect x="382.26" y="460" width="1.2" height="5" fill="#a9d3b2"/>
<circle cx="390.27" cy="456.6" r="2.1" fill="#e6eed2"/>
<rect x="389.67" y="460" width="1.2" height="5" fill="#a9d3b2"/>
<circle cx="397.68" cy="456.6" r="2.1" fill="#e6eed2"/>
<rect x="397.08" y="460" width="1.2" height="5" fill="#a9d3b2"/>
<circle cx="405.09" cy="456.6" r="2.1" fill="#e6eed2"/>
<rect x="404.49" y="460" width="1.2" height="5" fill="#a9d3b2"/>
<circle cx="412.50" cy="456.6" r="1.9" fill="#52a463" stroke="#d6d2aa" stroke-width="1"/>
<circle cx="412.50" cy="456.6" r="0.9" fill="#2a2a2a"/>
<rect x="411.90" y="460" width="1.2" height="5" fill="#a9d3b2"/>
<circle cx="419.91" cy="456.6" r="1.9" fill="#52a463" stroke="#d6d2aa" stroke-width="1"/>
<circle cx="419.91" cy="456.6" r="0.9" fill="#2a2a2a"/>
<rect x="419.31" y="460" width="1.2" height="5" fill="#a9d3b2"/>
<circle cx="427.32" cy="456.6" r="1.9" fill="#52a463" stroke="#d6d2aa" stroke-width="1"/>
<circle cx="427.32" cy="456.6" r="0.9" fill="#2a2a2a"/>
<rect x="426.72" y="460" width="1.2" height="5" fill="#a9d3b2"/>
<circle cx="434.73" cy="456.6" r="1.9" fill="#52a463" stroke="#d6d2aa" stroke-width="1"/>
<circle cx="434.73" cy="456.6" r="0.9" fill="#2a2a2a"/>
<rect x="434.13" y="460" width="1.2" height="5" fill="#a9d3b2"/>
<circle cx="442.14" cy="456.6" r="1.9" fill="#52a463" stroke="#d6d2aa" stroke-width="1"/>
<circle cx="442.14" cy="456.6" r="0.9" fill="#2a2a2a"/>
<rect x="441.54" y="460" width="1.2" height="5" fill="#a9d3b2"/>
<circle cx="449.55" cy="456.6" r="1.9" fill="#52a463" stroke="#d6d2aa" stroke-width="1"/>
<circle cx="449.55" cy="456.6" r="0.9" fill="#2a2a2a"/>
<rect x="448.95" y="460" width="1.2" height="5" fill="#a9d3b2"/>
<rect x="574.7" y="442.2" width="35.4" height="93.8" rx="1.5" fill="#2563a8"/>
<rect x="576.2" y="443.7" width="32.4" height="90.8" rx="1" fill="#3487d2"/>
<circle cx="591.9" cy="493" r="19" fill="#2f74bf"/>
<circle cx="591.9" cy="493" r="17.5" fill="#529be2"/>
<rect x="577" y="455" width="30.8" height="1" fill="#2563a8"/>
<circle cx="591.9" cy="448.4" r="5.6" fill="#24609f"/>
<circle cx="591.9" cy="448.4" r="4.5" fill="#f3f4f6"/>
<rect x="590.4" y="442" width="3" height="4" fill="#f3f4f6"/>
<path d="M587.7 467a4.2 4.2 0 0 1 8.4 0l1.2 34.5h11.8a5 5 0 0 1 0 10h-11.8l-0.9 31.5a4.5 4.5 0 0 1-9 0l-0.9-31.5h-11.8a5 5 0 0 1 0-10h11.8z" fill="#f2f2f2" stroke="#d8d8d8" stroke-width="0.5"/>
<circle cx="591.9" cy="506.3" r="6.6" fill="#e6e6e6" stroke="#cfcfcf" stroke-width="0.8"/>
<circle cx="591.9" cy="506.3" r="3.3" fill="#c9c9c9"/><circle cx="591.9" cy="506.3" r="1.4" fill="#b0b0b0"/>
<circle cx="591.9" cy="467.0" r="1" fill="#2c4a70"/>
<circle cx="591.9" cy="471.4" r="1" fill="#2c4a70"/>
<circle cx="591.9" cy="475.8" r="1" fill="#2c4a70"/>
<circle cx="591.9" cy="480.2" r="1" fill="#2c4a70"/>
<circle cx="591.9" cy="484.6" r="1" fill="#2c4a70"/>
<circle cx="591.9" cy="489.0" r="1" fill="#2c4a70"/>
<circle cx="591.9" cy="518.0" r="1" fill="#2c4a70"/>
<circle cx="591.9" cy="522.2" r="1" fill="#2c4a70"/>
<circle cx="591.9" cy="526.4" r="1" fill="#2c4a70"/>
<circle cx="591.9" cy="530.6" r="1" fill="#2c4a70"/>
<circle cx="591.9" cy="534.8" r="1" fill="#2c4a70"/>
<circle cx="591.9" cy="539.0" r="1" fill="#2c4a70"/>
<circle cx="591.9" cy="543.2" r="1" fill="#2c4a70"/>
<circle cx="574.9" cy="506.3" r="1" fill="#2c4a70"/>
<circle cx="578.9" cy="506.3" r="1" fill="#2c4a70"/>
<circle cx="604.9" cy="506.3" r="1" fill="#2c4a70"/>
<circle cx="608.9" cy="506.3" r="1" fill="#2c4a70"/>
<path d="M588 541l-4.5 11.5" stroke="#d9782c" stroke-width="2.6"/><path d="M591.9 541v11.5" stroke="#c83030" stroke-width="2.6"/><path d="M595.8 541l4.5 11.5" stroke="#6e4428" stroke-width="2.6"/>
<rect x="580" y="552" width="23.7" height="23.7" rx="1" fill="#2a2a2a"/>
<g fill="none" stroke="#777" stroke-width="0.8"><path d="M582.3 573v-3h4.5v3M589.6 573v-3h4.5v3M596.9 573v-3h4.5v3"/></g>
<g stroke="#999" stroke-width="0.9"><path d="M382.5 312v9M389.3 312v9M396.2 312v9"/></g>
<circle cx="389.3" cy="298.7" r="17.3" fill="#1f3b5c"/>
<circle cx="389.3" cy="298.7" r="12" fill="#5c92d0"/>
<path d="M389.3 298.7l-12 0.5" stroke="#1f3b5c" stroke-width="2.2" stroke-linecap="round"/>
<g stroke="#999" stroke-width="0.9"><path d="M338 313v8M345 313v8"/></g>
<path d="M335.8 316.3V304.5a4.5 4.5 0 0 1 4.5-4.5h1a4.5 4.5 0 0 1 4.5 4.5v4.5l-0.8 1.5 0.8 1.5v4.3z" fill="#2b6f9c"/>
<rect x="344.7" y="328.2" width="31.3" height="1" fill="#a0a0a0"/>
<rect x="350.5" y="325.8" width="19" height="5.8" rx="2.6" fill="#e9c47e"/>
<rect x="353.5" y="325.8" width="1.6" height="5.8" fill="#8a5a2a"/>
<rect x="356.5" y="325.8" width="1.6" height="5.8" fill="#2a2a2a"/>
<rect x="362" y="325.8" width="1.6" height="5.8" fill="#e0882a"/>
<rect x="365" y="325.8" width="1.6" height="5.8" fill="#c8a060"/>
<g stroke="#999" stroke-width="0.9"><path d="M331 372v8M337 372v8"/></g>
<path d="M328.9 375.6V364a5.2 5.2 0 0 1 10.4 0v11.6z" fill="#2f8a3a"/>
<g stroke="#999" stroke-width="0.9"><path d="M390 372v8M396 372v8"/></g>
<path d="M387.7 375.6V364a5.4 5.4 0 0 1 10.8 0v11.6z" fill="#9a2222"/>
<g stroke="#999" stroke-width="0.9"><path d="M427.2 368v5M434.4 368v5M441.7 368v5"/></g>
<rect x="423.9" y="361.4" width="20.3" height="7.2" rx="0.8" fill="#333"/>
<rect x="425.9" y="362.8" width="7" height="4.4" fill="#222"/>
<rect x="434.9" y="362.8" width="6.5" height="4.4" fill="#aaa"/>
<g stroke="#999" stroke-width="0.9"><path d="M464.0 368v5M471.2 368v5M478.5 368v5"/></g>
<rect x="460.7" y="361.4" width="20.3" height="7.2" rx="0.8" fill="#333"/>
<rect x="462.7" y="362.8" width="7" height="4.4" fill="#222"/>
<rect x="471.7" y="362.8" width="6.5" height="4.4" fill="#aaa"/>
<g stroke="#999" stroke-width="0.9"><path d="M501.1 368v5M508.3 368v5M515.6 368v5"/></g>
<rect x="497.8" y="361.4" width="20.3" height="7.2" rx="0.8" fill="#333"/>
<rect x="499.8" y="362.8" width="7" height="4.4" fill="#222"/>
<rect x="508.8" y="362.8" width="6.5" height="4.4" fill="#aaa"/>
<rect x="330.1" y="389" width="1" height="28.5" fill="#a0a0a0"/>
<rect x="327.70000000000005" y="391" width="5.8" height="21" rx="2.6" fill="#e8c98c"/>
<rect x="327.70000000000005" y="400.10" width="5.8" height="1.8" fill="#c8302a"/>
<rect x="327.70000000000005" y="403.90" width="5.8" height="1.8" fill="#2a2a2a"/>
<rect x="327.70000000000005" y="407.80" width="5.8" height="1.8" fill="#8a5a2a"/>
<rect x="389.1" y="389" width="1" height="28.5" fill="#a0a0a0"/>
<rect x="386.70000000000005" y="391" width="5.8" height="21" rx="2.6" fill="#e8c98c"/>
<rect x="386.70000000000005" y="400.10" width="5.8" height="1.8" fill="#c8302a"/>
<rect x="386.70000000000005" y="403.90" width="5.8" height="1.8" fill="#2a2a2a"/>
<rect x="386.70000000000005" y="407.80" width="5.8" height="1.8" fill="#8a5a2a"/>
<rect x="440.7" y="389" width="1" height="28.5" fill="#a0a0a0"/>
<rect x="438.3" y="391" width="5.8" height="21" rx="2.6" fill="#e8c98c"/>
<rect x="438.3" y="400.10" width="5.8" height="1.8" fill="#c8302a"/>
<rect x="438.3" y="403.90" width="5.8" height="1.8" fill="#2a2a2a"/>
<rect x="438.3" y="407.80" width="5.8" height="1.8" fill="#8a5a2a"/>
<rect x="477.6" y="389" width="1" height="28.5" fill="#a0a0a0"/>
<rect x="475.20000000000005" y="391" width="5.8" height="21" rx="2.6" fill="#e8c98c"/>
<rect x="475.20000000000005" y="400.10" width="5.8" height="1.8" fill="#e8922a"/>
<rect x="475.20000000000005" y="403.90" width="5.8" height="1.8" fill="#2a2a2a"/>
<rect x="475.20000000000005" y="407.80" width="5.8" height="1.8" fill="#8a5a2a"/>
<rect x="514.4" y="389" width="1" height="28.5" fill="#a0a0a0"/>
<rect x="512.0" y="391" width="5.8" height="21" rx="2.6" fill="#e8c98c"/>
<rect x="512.0" y="400.10" width="5.8" height="1.8" fill="#e8922a"/>
<rect x="512.0" y="403.90" width="5.8" height="1.8" fill="#2a2a2a"/>
<rect x="512.0" y="407.80" width="5.8" height="1.8" fill="#8a5a2a"/>
<rect x="536.4" y="389" width="1" height="28.5" fill="#a0a0a0"/>
<rect x="534.0" y="391" width="5.8" height="21" rx="2.6" fill="#e8c98c"/>
<rect x="534.0" y="400.10" width="5.8" height="1.8" fill="#e8922a"/>
<rect x="534.0" y="403.90" width="5.8" height="1.8" fill="#2a2a2a"/>
<rect x="534.0" y="407.80" width="5.8" height="1.8" fill="#8a5a2a"/>
<path d="M530 284.5V252.5a5 5 0 0 1 5-5H592a5 5 0 0 1 5 5v8" fill="none" stroke="#2b2b2b" stroke-width="1.8" stroke-linecap="round" stroke-linejoin="round"/>
<path d="M537.2 277.5V261.5a4.5 4.5 0 0 1 4.5-4.5H585a4.3 4.3 0 0 1 4.3 4.3v1" fill="none" stroke="#d02d2a" stroke-width="1.8" stroke-linecap="round" stroke-linejoin="round"/>
<path d="M589.3 258.5l1.8 3.5-1.8 5-1.8-5z" fill="#c42222"/><path d="M597 258.5l1.8 3.5-1.8 5-1.8-5z" fill="#2a2a2a"/>
<path d="M537.3 284.6H541a4 4 0 0 1 4 4V426.5a5 5 0 0 1-5 5H512.7a5 5 0 0 1-5-5V417.3" fill="none" stroke="#2b2b2b" stroke-width="1.8" stroke-linecap="round" stroke-linejoin="round"/>
<path d="M297 317.3H299a4 4 0 0 0 4-4V289a4.5 4.5 0 0 1 4.5-4.5H323.3" fill="none" stroke="#2b2b2b" stroke-width="1.8" stroke-linecap="round" stroke-linejoin="round"/>
<path d="M338 284.5V300" fill="none" stroke="#2b2b2b" stroke-width="1.8" stroke-linecap="round" stroke-linejoin="round"/>
<path d="M382.7 336V337a3.5 3.5 0 0 1-3.5 3.5H318.3a3.5 3.5 0 0 0-3.5 3.5V413.8a3.5 3.5 0 0 0 3.5 3.5H323.3" fill="none" stroke="#2b2b2b" stroke-width="1.8" stroke-linecap="round" stroke-linejoin="round"/>
<path d="M396.2 336V345.5H313.3a4 4 0 0 0-4 4V405.7a4 4 0 0 0 4 4H323.3" fill="none" stroke="#d02d2a" stroke-width="1.8" stroke-linecap="round" stroke-linejoin="round"/>
<path d="M389.3 336V345.5H311a5 5 0 0 0-5 5V421.7a5 5 0 0 0 5 5H355.7a5 5 0 0 1 5 5V454.2" fill="none" stroke="#2b8ac4" stroke-width="2.4" stroke-linecap="round" stroke-linejoin="round"/>
<path d="M374.7 336V345" fill="none" stroke="#3fb04b" stroke-width="1.8" stroke-linecap="round" stroke-linejoin="round"/>
<path d="M306 421.7a5 5 0 0 0 5 5H370.6a5 5 0 0 1 5 5V454.2" fill="none" stroke="#2b8ac4" stroke-width="2.2" stroke-linecap="round" stroke-linejoin="round"/>
<path d="M300 447H406.7a6 6 0 0 1 6 6V454.2" fill="none" stroke="#2b8ac4" stroke-width="1.8" stroke-linecap="round" stroke-linejoin="round"/>
<path d="M300 447H414.1a6 6 0 0 1 6 6V454.2" fill="none" stroke="#2b8ac4" stroke-width="1.8" stroke-linecap="round" stroke-linejoin="round"/>
<path d="M300 447H421.5a6 6 0 0 1 6 6V454.2" fill="none" stroke="#2b8ac4" stroke-width="1.8" stroke-linecap="round" stroke-linejoin="round"/>
<path d="M300 447H428.9a6 6 0 0 1 6 6V454.2" fill="none" stroke="#2b8ac4" stroke-width="1.8" stroke-linecap="round" stroke-linejoin="round"/>
<path d="M151.7 388H146.5a4.5 4.5 0 0 0-4.5 4.5V442.5a4.5 4.5 0 0 0 4.5 4.5H300" fill="none" stroke="#2b8ac4" stroke-width="1.8" stroke-linecap="round" stroke-linejoin="round"/>
<path d="M151.7 403H142a4.5 4.5 0 0 0-4.5 4.5V443a4.5 4.5 0 0 0 4.5 4.5H300" fill="none" stroke="#2b8ac4" stroke-width="1.8" stroke-linecap="round" stroke-linejoin="round"/>
<path d="M151.7 352H140a4 4 0 0 0-4 4V439.3a4 4 0 0 0 4 4H376.2a6 6 0 0 0 6-6V410" fill="none" stroke="#d02d2a" stroke-width="1.8" stroke-linecap="round" stroke-linejoin="round"/>
<path d="M306 440V579.3a6 6 0 0 0 6 6H578.7a6 6 0 0 0 6-6V575" fill="none" stroke="#4fa05c" stroke-width="1.9" stroke-linecap="round" stroke-linejoin="round"/>
<path d="M296 325.2H299a4.5 4.5 0 0 1 4.5 4.5V341a4.5 4.5 0 0 0 4.5 4.5H320" fill="none" stroke="#3fb04b" stroke-width="2" stroke-linecap="round" stroke-linejoin="round"/>
<path d="M296 332.6H299a4.5 4.5 0 0 1 4.5 4.5V341a4.5 4.5 0 0 0 4.5 4.5H320" fill="none" stroke="#3fb04b" stroke-width="2" stroke-linecap="round" stroke-linejoin="round"/>
<path d="M296 339.9H299a4.5 4.5 0 0 1 4.5 4.5V341a4.5 4.5 0 0 0 4.5 4.5H320" fill="none" stroke="#3fb04b" stroke-width="2" stroke-linecap="round" stroke-linejoin="round"/>
<path d="M296 346.9H312" fill="none" stroke="#3fb04b" stroke-width="2" stroke-linecap="round" stroke-linejoin="round"/>
<path d="M302.3 346V444" fill="none" stroke="#3fb04b" stroke-width="2.8" stroke-linecap="round" stroke-linejoin="round"/>
<path d="M303 346.3H521" fill="none" stroke="#3fb04b" stroke-width="3.6" stroke-linecap="round" stroke-linejoin="round"/>
<path d="M333.6 346.3a4 4 0 0 1 4 4V358.3" fill="none" stroke="#3fb04b" stroke-width="2" stroke-linecap="round" stroke-linejoin="round"/>
<path d="M392.8 346.3a4 4 0 0 1 4 4V358.3" fill="none" stroke="#3fb04b" stroke-width="2" stroke-linecap="round" stroke-linejoin="round"/>
<path d="M437.1 346.3a4 4 0 0 1 4 4V358.3" fill="none" stroke="#3fb04b" stroke-width="2" stroke-linecap="round" stroke-linejoin="round"/>
<path d="M474.1 346.3a4 4 0 0 1 4 4V358.3" fill="none" stroke="#3fb04b" stroke-width="2" stroke-linecap="round" stroke-linejoin="round"/>
<path d="M510.9 346.3a4 4 0 0 1 4 4V358.3" fill="none" stroke="#3fb04b" stroke-width="2" stroke-linecap="round" stroke-linejoin="round"/>
<path d="M537 355.5V365.8" fill="none" stroke="#3fb04b" stroke-width="2" stroke-linecap="round" stroke-linejoin="round"/>
<path d="M293 362.3H302" fill="none" stroke="#3fb04b" stroke-width="1.8" stroke-linecap="round" stroke-linejoin="round"/>
<path d="M293 373.7H302" fill="none" stroke="#3fb04b" stroke-width="1.8" stroke-linecap="round" stroke-linejoin="round"/>
<path d="M293 388.3H302" fill="none" stroke="#3fb04b" stroke-width="1.8" stroke-linecap="round" stroke-linejoin="round"/>
<path d="M293 395.7H302" fill="none" stroke="#3fb04b" stroke-width="1.8" stroke-linecap="round" stroke-linejoin="round"/>
<path d="M293 403H302" fill="none" stroke="#3fb04b" stroke-width="1.8" stroke-linecap="round" stroke-linejoin="round"/>
<path d="M293 417.7H302" fill="none" stroke="#3fb04b" stroke-width="1.8" stroke-linecap="round" stroke-linejoin="round"/>
<path d="M293 355H302" fill="none" stroke="#2b8ac4" stroke-width="1.8" stroke-linecap="round" stroke-linejoin="round"/>
<path d="M293 381H302" fill="none" stroke="#2b8ac4" stroke-width="1.8" stroke-linecap="round" stroke-linejoin="round"/>
<path d="M293 410.3H302" fill="none" stroke="#2b8ac4" stroke-width="1.8" stroke-linecap="round" stroke-linejoin="round"/>
<path d="M293 325.2H298" fill="none" stroke="#3fb04b" stroke-width="1.8" stroke-linecap="round" stroke-linejoin="round"/>
<path d="M293 332.6H298" fill="none" stroke="#3fb04b" stroke-width="1.8" stroke-linecap="round" stroke-linejoin="round"/>
<path d="M293 339.9H298" fill="none" stroke="#3fb04b" stroke-width="1.8" stroke-linecap="round" stroke-linejoin="round"/>
<path d="M293 346.9H298" fill="none" stroke="#3fb04b" stroke-width="1.8" stroke-linecap="round" stroke-linejoin="round"/>
<path d="M338.4 417.3V454.2" fill="none" stroke="#2b2b2b" stroke-width="1.5" stroke-linecap="round" stroke-linejoin="round"/>
<path d="M345.8 410V454.2" fill="none" stroke="#d02d2a" stroke-width="1.5" stroke-linecap="round" stroke-linejoin="round"/>
<path d="M353.3 417.3V454.2" fill="none" stroke="#2b2b2b" stroke-width="1.5" stroke-linecap="round" stroke-linejoin="round"/>
<path d="M368.2 417.3V454.2" fill="none" stroke="#2b2b2b" stroke-width="1.5" stroke-linecap="round" stroke-linejoin="round"/>
<path d="M449.2 417.3V454.2" fill="none" stroke="#2b2b2b" stroke-width="1.5" stroke-linecap="round" stroke-linejoin="round"/>
<path d="M389.6 417V436.5a3.5 3.5 0 0 0 3.5 3.5H418" fill="none" stroke="#d02d2a" stroke-width="1.5" stroke-linecap="round" stroke-linejoin="round"/>
<path d="M437 440H440a2.2 2.2 0 0 1 2.2 2.2V454.2" fill="none" stroke="#d02d2a" stroke-width="1.5" stroke-linecap="round" stroke-linejoin="round"/>
<rect x="417" y="439.5" width="21" height="1" fill="#a0a0a0"/>
<rect x="420" y="437.2" width="15" height="5.6" rx="2.5" fill="#e9c47e"/>
<rect x="422.5" y="437.2" width="1.5" height="5.6" fill="#8a5a2a"/>
<rect x="425.2" y="437.2" width="1.5" height="5.6" fill="#2a2a2a"/>
<rect x="428" y="437.2" width="1.5" height="5.6" fill="#c8302a"/>
<rect x="431.5" y="437.2" width="1.5" height="5.6" fill="#c8a060"/>
<path d="M433.9 386.8V409.5" fill="none" stroke="#d02d2a" stroke-width="1.5" stroke-linecap="round" stroke-linejoin="round"/>
<path d="M470.7 386.8V409.5" fill="none" stroke="#d02d2a" stroke-width="1.5" stroke-linecap="round" stroke-linejoin="round"/>
<path d="M507.5 386.8V409.5" fill="none" stroke="#d02d2a" stroke-width="1.5" stroke-linecap="round" stroke-linejoin="round"/>
<path d="M522.3 386.8V409.5" fill="none" stroke="#d02d2a" stroke-width="1.5" stroke-linecap="round" stroke-linejoin="round"/>
<rect x="521.6" y="339" width="16.5" height="16.5" rx="1" fill="#e2e2e2"/>
<rect x="521.5" y="339.4" width="2.6" height="2.6" fill="#3a3a3a"/>
<rect x="535.2" y="339.4" width="2.6" height="2.6" fill="#3a3a3a"/>
<rect x="521.5" y="352.4" width="2.6" height="2.6" fill="#3a3a3a"/>
<rect x="535.2" y="352.4" width="2.6" height="2.6" fill="#3a3a3a"/>
<circle cx="529.8" cy="347.3" r="4.8" fill="#333"/>
<defs><linearGradient id="tbL" x1="0" y1="0" x2="0" y2="1"><stop offset="0" stop-color="#66707e"/><stop offset="1" stop-color="#555f6d"/></linearGradient><linearGradient id="tbB" x1="0" y1="0" x2="0" y2="1"><stop offset="0" stop-color="#c6ddf6"/><stop offset="0.5" stop-color="#b8d5f2"/><stop offset="1" stop-color="#bcd8f4"/></linearGradient><linearGradient id="tbR" x1="0" y1="0" x2="1" y2="0"><stop offset="0" stop-color="#5b6374"/><stop offset="1" stop-color="#687080"/></linearGradient><linearGradient id="btn" x1="0" y1="0" x2="0" y2="1"><stop offset="0" stop-color="#dceaf8"/><stop offset="1" stop-color="#bcd4ee"/></linearGradient><radialGradient id="orb" cx="0.5" cy="0.75" r="0.65"><stop offset="0" stop-color="#6fd6f2"/><stop offset="0.45" stop-color="#2f7fc0"/><stop offset="1" stop-color="#1d4476"/></radialGradient></defs>
<rect x="0" y="649" width="900" height="26" fill="url(#tbB)"/>
<rect x="0" y="649" width="82" height="26" fill="url(#tbL)"/>
<rect x="715" y="649" width="185" height="26" fill="url(#tbR)"/>
<rect x="82.5" y="649.5" width="38" height="26" rx="2" fill="url(#btn)" stroke="#9fb2c6" stroke-width="1"/>
<rect x="82" y="649" width="1.2" height="26" fill="#56606e"/>
<rect x="121.5" y="649.5" width="85" height="26" rx="2" fill="url(#btn)" stroke="#9fb2c6" stroke-width="1"/>
<rect x="121" y="649" width="1.2" height="26" fill="#56606e"/>
<rect x="207.5" y="649.5" width="36" height="26" rx="2" fill="url(#btn)" stroke="#9fb2c6" stroke-width="1"/>
<rect x="207" y="649" width="1.2" height="26" fill="#56606e"/>
<rect x="249.0" y="649.5" width="39.5" height="26" rx="2" fill="url(#btn)" stroke="#9fb2c6" stroke-width="1"/>
<rect x="248.5" y="649" width="1.2" height="26" fill="#56606e"/>
<rect x="290.5" y="649.5" width="39.5" height="26" rx="2" fill="url(#btn)" stroke="#9fb2c6" stroke-width="1"/>
<rect x="290" y="649" width="1.2" height="26" fill="#56606e"/>
<rect x="333.0" y="649.5" width="38.5" height="26" rx="2" fill="url(#btn)" stroke="#9fb2c6" stroke-width="1"/>
<rect x="332.5" y="649" width="1.2" height="26" fill="#56606e"/>
<rect x="374.5" y="649.5" width="38.5" height="26" rx="2" fill="url(#btn)" stroke="#9fb2c6" stroke-width="1"/>
<rect x="374" y="649" width="1.2" height="26" fill="#56606e"/>
<rect x="0" y="648.4" width="900" height="1.2" fill="#5f6876"/>
<circle cx="17.8" cy="662" r="12" fill="url(#orb)" stroke="#8aa4bc" stroke-width="0.9"/>
<g opacity="0.92"><path d="M12.2 655.5q3-1.3 5.6 0v6q-2.6-1.2-5.6 0z" fill="#e8502a"/><path d="M18.6 655.8q3 1.2 6 0v6q-3 1.2-6 0z" fill="#78b83a"/><path d="M12.2 662.3q3-1.3 5.6 0v6q-2.6-1.2-5.6 0z" fill="#2a9ae0"/><path d="M18.6 662.6q3 1.2 6 0v6q-3 1.2-6 0z" fill="#f4c020"/></g>
<text x="61.7" y="671.3" font-family='"Liberation Sans", sans-serif' font-weight="bold" font-size="31" fill="#3cb4ec" text-anchor="middle">e</text>
<path d="M51.5 670.5c-3-3 2-11 9-15.5s11-5 9.5-1.5" fill="none" stroke="#e8c84a" stroke-width="1.8"/>
<g><rect x="92" y="655" width="20" height="15" rx="1" fill="#e9c96a"/><rect x="92" y="659" width="20" height="11" fill="#f3dc90"/><rect x="95" y="663" width="14" height="5" fill="#7fb2d8"/><rect x="92" y="652.5" width="7" height="3" fill="#d9b24a"/></g>
<g><rect x="132" y="653" width="18" height="17" fill="#a8c8e8" stroke="#7aa0c4" stroke-width="0.8"/><circle cx="141" cy="661.5" r="6.5" fill="#e8892a"/><path d="M139 658l5 3.5-5 3.5z" fill="#fff"/></g>
<g><path d="M185 661.5L176.34 656.50A10 10 0 0 1 193.66 656.50z" fill="#db4437"/><path d="M185 661.5L193.66 656.50A10 10 0 0 1 185.00 671.50z" fill="#f4c20d"/><path d="M185 661.5L185.00 671.50A10 10 0 0 1 176.34 656.50z" fill="#0f9d58"/><circle cx="185" cy="661.5" r="4.80" fill="#fff"/><circle cx="185" cy="661.5" r="3.60" fill="#4285f4"/></g>
<g><path d="M225 661.5L216.34 656.50A10 10 0 0 1 233.66 656.50z" fill="#db4437"/><path d="M225 661.5L233.66 656.50A10 10 0 0 1 225.00 671.50z" fill="#f4c20d"/><path d="M225 661.5L225.00 671.50A10 10 0 0 1 216.34 656.50z" fill="#0f9d58"/><circle cx="225" cy="661.5" r="4.80" fill="#fff"/><circle cx="225" cy="661.5" r="3.60" fill="#4285f4"/><circle cx="230" cy="666.5" r="4" fill="#fff"/><circle cx="230" cy="665.5" r="1.5" fill="#333"/><path d="M227 669.5a3 2.5 0 0 1 6 0z" fill="#333"/></g>
<g><path d="M394 661.5L385.34 656.50A10 10 0 0 1 402.66 656.50z" fill="#db4437"/><path d="M394 661.5L402.66 656.50A10 10 0 0 1 394.00 671.50z" fill="#f4c20d"/><path d="M394 661.5L394.00 671.50A10 10 0 0 1 385.34 656.50z" fill="#0f9d58"/><circle cx="394" cy="661.5" r="4.80" fill="#fff"/><circle cx="394" cy="661.5" r="3.60" fill="#4285f4"/><circle cx="399" cy="666.5" r="4.5" fill="#5a5fc8" stroke="#fff" stroke-width="0.8"/><circle cx="399" cy="666.5" r="1.7" fill="#c8c8f0"/></g>
<g><path d="M259 657l14-3 4 13-14 3z" fill="#8fd0e0" stroke="#5a9ab0" stroke-width="0.6"/><path d="M263 670l14-3" stroke="#e8f4f8" stroke-width="2"/></g>
<g><rect x="302" y="653" width="17" height="17" fill="#f4f8fc" stroke="#8aa8c8" stroke-width="0.8"/><rect x="302" y="653" width="17" height="3.5" fill="#5a8ac8"/><path d="M305 667l4-9 4 9z" fill="#e87a3a"/><rect x="311" y="658" width="6" height="5" fill="#5aa0e0"/></g>
<g><rect x="342.5" y="653.5" width="20" height="16" fill="#fff" stroke="#111" stroke-width="1.6"/><rect x="345" y="656" width="8" height="11" fill="#111"/><text x="349" y="665.5" font-family='"Liberation Sans", sans-serif' font-weight="bold" font-size="10" fill="#fff" text-anchor="middle">7</text><text x="357.5" y="666" font-family='"Liberation Sans", sans-serif' font-weight="bold" font-size="10" fill="#111" text-anchor="middle">z</text></g>
<rect x="637" y="671" width="43" height="4" fill="#7d9fd6" opacity="0.75"/>
<rect x="701" y="671" width="5" height="4" fill="#7d9fd6" opacity="0.6"/>
</svg>
</body></html>
